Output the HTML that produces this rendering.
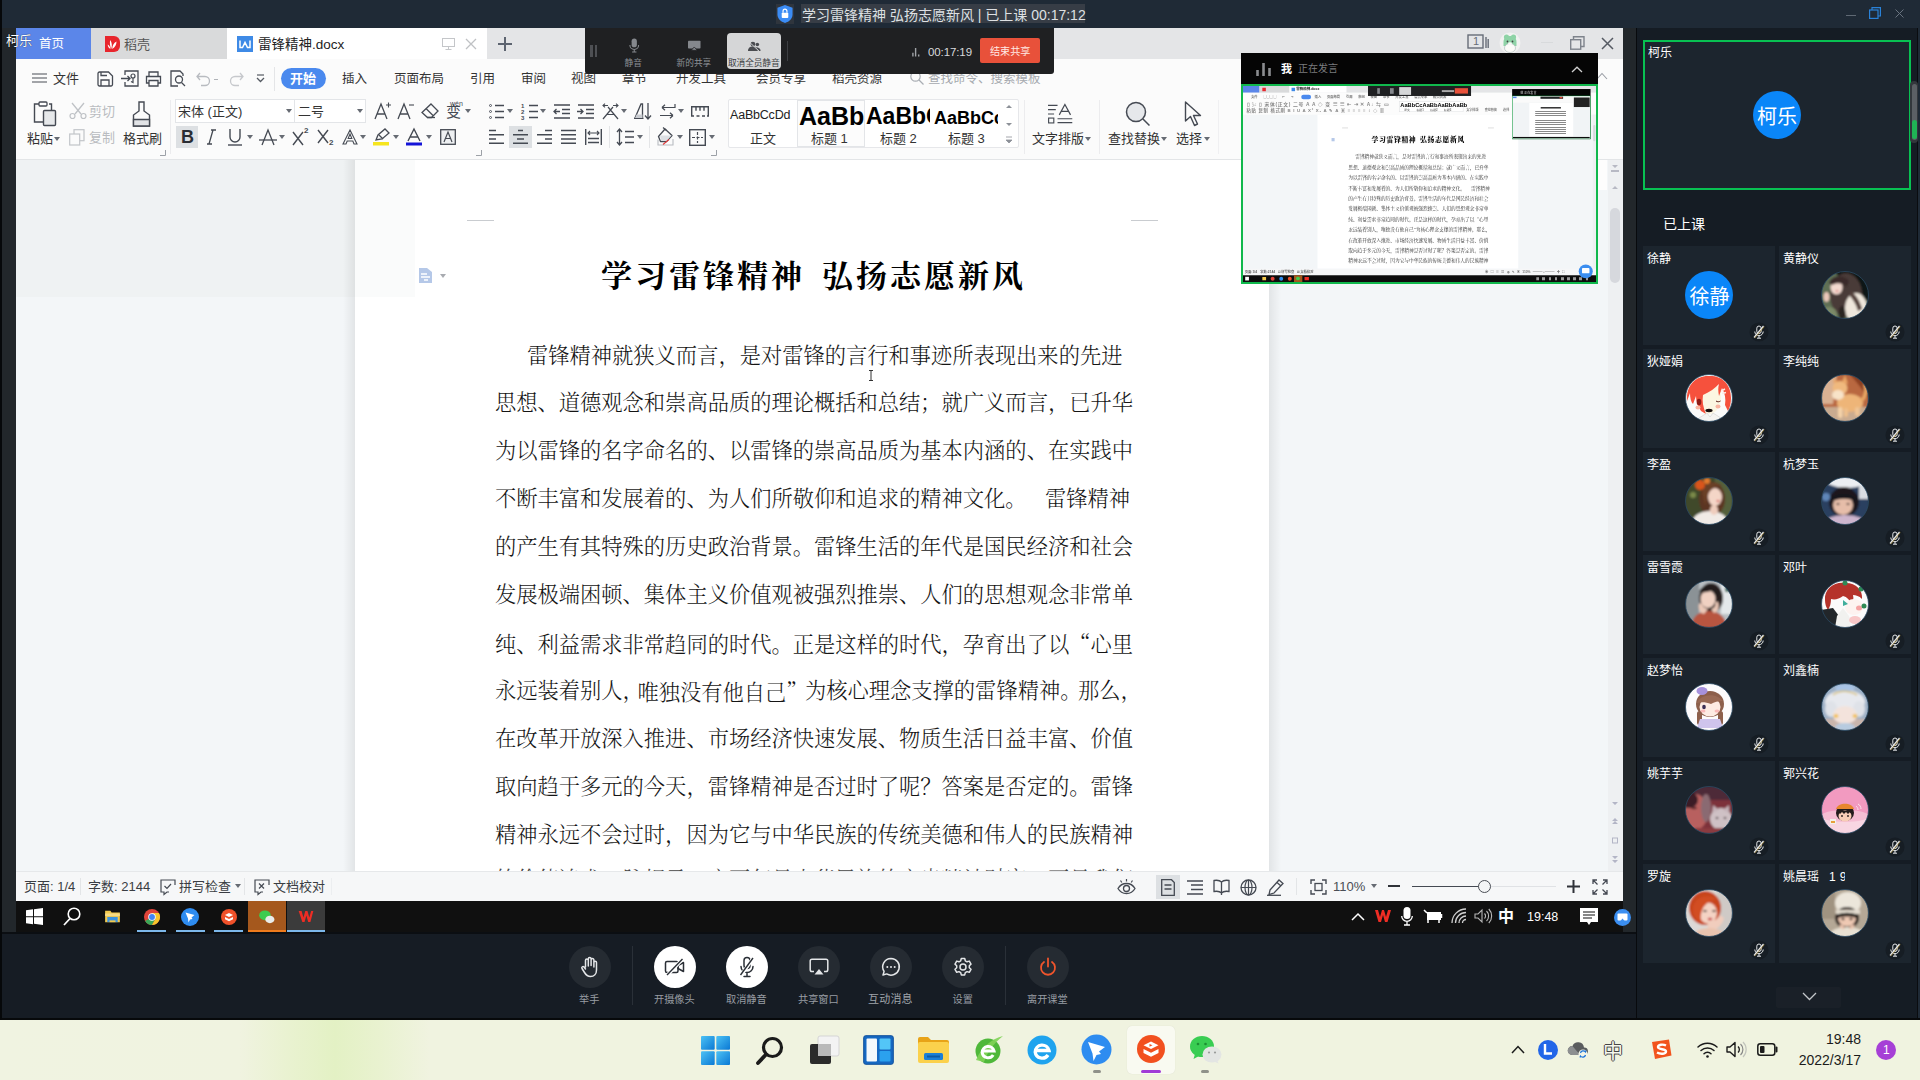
<!DOCTYPE html>
<html lang="zh-CN">
<head>
<meta charset="utf-8">
<title>学习雷锋精神 弘扬志愿新风</title>
<style>
*{box-sizing:border-box;margin:0;padding:0}
html,body{width:1920px;height:1080px;overflow:hidden;background:#1a232d}
body{position:relative;font-family:"Liberation Sans","Noto Sans CJK SC",sans-serif;color:#222;-webkit-font-smoothing:antialiased}
.abs{position:absolute}
svg{position:absolute;overflow:visible}
.t{position:absolute;white-space:nowrap;line-height:1}
/* ---------- outer app ---------- */
#titlebar{left:0;top:0;width:1920px;height:28px;background:#1f2a36}
#leftstrip{left:0;top:28px;width:16px;height:990px;background:#22272b}
#leftedge{left:0;top:0;width:2px;height:1020px;background:#06080a}
#midstrip{left:1623px;top:28px;width:13px;height:904px;background:#22272b}
#rightpanel{left:1636px;top:28px;width:284px;height:990px;background:#151c24}
#ctrlbar{left:0;top:932px;width:1636px;height:86px;background:#161c24}
#ctrlline{left:0;top:1018px;width:1920px;height:2px;background:#07090b}
#vline{left:1636px;top:28px;width:1px;height:990px;background:#080a0d}
#win11{left:0;top:1020px;width:1920px;height:60px;background:#eff1df}
/* ---------- WPS window ---------- */
.q{font-family:'Noto Serif CJK SC',serif}
.bl{position:absolute;left:140px;white-space:nowrap;line-height:1;font-size:21.270px;letter-spacing:0}
#wps{left:16px;top:28px;width:1607px;height:873px;background:#fff;overflow:hidden}
#win10{left:16px;top:901px;width:1607px;height:31px;background:#101010}
</style>
</head>
<body>
<div id="titlebar" class="abs"></div>
<div id="leftstrip" class="abs"></div>
<div id="midstrip" class="abs"></div>
<div id="rightpanel" class="abs"></div>
<div id="ctrlbar" class="abs"></div>
<div id="wps" class="abs">
<div class="abs" style="left:-16px;top:-28px;width:1920px;height:1080px">
<!-- tab bar -->
<div class="abs" style="left:16px;top:28px;width:1607px;height:31px;background:#e4e5e7"></div>
<div class="abs" style="left:16px;top:28px;width:75px;height:31px;background:#5b86e9"></div>
<div class="t" style="left:39px;top:38px;font-size:12.500px;color:#fff">首页</div>
<div class="abs" style="left:91px;top:28px;width:136px;height:31px;background:#d9dadb"></div>
<svg style="left:104px;top:36px" width="16" height="16" viewBox="0 0 16 16"><path d="M1 0h9a6 6 0 0 1 6 6v4a6 6 0 0 1-6 6H1z" fill="#e8262d"/><path d="M7.200 13C6 10 5.500 7 6.200 4c1.300 2 1.800 4 1.600 6.500zM8.200 13c.2-3.500 1.500-6 4.300-7.500 0 3-1.300 5.800-4.300 7.500zM6.500 13C4.800 12 3.800 10.500 3.700 8.500c1.500 .8 2.500 2.300 2.800 4.500z" fill="#fff"/></svg>
<div class="t" style="left:124px;top:38px;font-size:13px;color:#555">稻壳</div>
<div class="abs" style="left:227px;top:28px;width:260px;height:31px;background:#fff"></div>
<svg style="left:237px;top:36px" width="16" height="16" viewBox="0 0 16 16"><rect width="16" height="16" fill="#3e8ae6"/><path d="M3 4.500v7h2.500l2.500-5 2.500 5H13v-7" fill="none" stroke="#fff" stroke-width="1.500"/></svg>
<div class="t" style="left:258px;top:38px;font-size:13.500px;color:#222">雷锋精神.docx</div>
<svg style="left:442px;top:38px" width="13" height="12" viewBox="0 0 13 12"><rect x=".5" y=".5" width="12" height="8" fill="none" stroke="#c4c6c9"/><path d="M6.500 8.500v3M3.500 11.500h6" stroke="#c4c6c9"/></svg>
<svg style="left:465px;top:38px" width="12" height="12" viewBox="0 0 12 12"><path d="M1 1l10 10M11 1L1 11" stroke="#bfc1c4" stroke-width="1.300"/></svg>
<svg style="left:498px;top:37px" width="14" height="14" viewBox="0 0 14 14"><path d="M7 0v14M0 7h14" stroke="#5d6470" stroke-width="2"/></svg>
<!-- right window controls -->
<svg style="left:1467px;top:34px" width="22" height="16" viewBox="0 0 22 16"><rect x="1" y="1" width="15" height="13" fill="none" stroke="#676d78" stroke-width="1.400"/><path d="M19 3v11M21.200 5v9" stroke="#676d78" stroke-width="1.400"/></svg>
<div class="t" style="left:1473px;top:36px;font-size:11px;color:#676d78">1</div>
<svg style="left:1499px;top:32px" width="22" height="22" viewBox="0 0 22 22"><circle cx="11" cy="11" r="10.500" fill="#f1f2f1"/><circle cx="7.500" cy="5" r="2.600" fill="#8ed3a6"/><circle cx="14.500" cy="5" r="2.600" fill="#8ed3a6"/><path d="M4.500 10c0-4 3-6 6.500-6s6.500 2 6.500 6v4h-13z" fill="#8ed3a6"/><ellipse cx="11" cy="16" rx="5.500" ry="4.500" fill="#fbfbf8" stroke="#9aa" stroke-width=".5"/><circle cx="8.500" cy="9.500" r=".9" fill="#444"/><circle cx="13.500" cy="9.500" r=".9" fill="#444"/><ellipse cx="11" cy="11.500" rx="2" ry="1.200" fill="#f5f7f4"/></svg>
<div class="abs" style="left:1541px;top:42px;width:12px;height:1px;background:#d8dadc"></div>
<svg style="left:1570px;top:36px" width="15" height="14" viewBox="0 0 15 14"><rect x=".7" y="3.700" width="10" height="9.500" fill="none" stroke="#7e838c" stroke-width="1.400"/><path d="M3.500 3.500V.7h10.500v9.800h-3" fill="none" stroke="#7e838c" stroke-width="1.400"/></svg>
<svg style="left:1601px;top:37px" width="13" height="13" viewBox="0 0 13 13"><path d="M1 1l11 11M12 1L1 12" stroke="#555a63" stroke-width="1.500"/></svg>
<!-- menu row -->
<div class="abs" style="left:16px;top:59px;width:1607px;height:37px;background:#fbfbfb"></div>
<svg style="left:32px;top:73px" width="15" height="10" viewBox="0 0 15 10"><path d="M0 1h15M0 5h15M0 9h15" stroke="#4a4f57" stroke-width="1.200"/></svg>
<div class="t" style="left:53px;top:72px;font-size:13px;color:#333">文件</div>
<svg style="left:97px;top:71px" width="17" height="16" viewBox="0 0 17 16"><path d="M1 2.500a1.500 1.500 0 0 1 1.500-1.500h9l4 4v8.500a1.500 1.500 0 0 1-1.500 1.500h-11.500a1.500 1.500 0 0 1-1.500-1.500zM4 15v-6h8v6M4 1v3.500h6" fill="none" stroke="#454a53" stroke-width="1.300"/></svg>
<svg style="left:121px;top:70px" width="18" height="17" viewBox="0 0 18 17"><path d="M4 5V1h13v15H4v-4" fill="none" stroke="#454a53" stroke-width="1.300"/><path d="M0 8.500h9M6.500 6l2.500 2.500-2.500 2.500" fill="none" stroke="#454a53" stroke-width="1.300"/><circle cx="12" cy="6" r="2" fill="none" stroke="#454a53" stroke-width="1.200"/><path d="M12 8v4.500l-2-1" fill="none" stroke="#454a53" stroke-width="1.200"/></svg>
<svg style="left:145px;top:71px" width="17" height="16" viewBox="0 0 17 16"><path d="M4 5V1h9v4M4 12H1.500V5.500h14V12H13M4 9.500h9V15H4z" fill="none" stroke="#454a53" stroke-width="1.300"/></svg>
<svg style="left:170px;top:70px" width="17" height="17" viewBox="0 0 17 17"><path d="M13 6V4l-3-3H1v15h7" fill="none" stroke="#454a53" stroke-width="1.300"/><circle cx="9" cy="9.500" r="3.500" fill="none" stroke="#454a53" stroke-width="1.300"/><path d="M11.500 12.500l3.500 3.500" stroke="#454a53" stroke-width="1.300"/></svg>
<svg style="left:196px;top:72px" width="15" height="14" viewBox="0 0 15 14"><path d="M4 1L1 4.500 4 8M1 4.500h8a4.500 4.500 0 0 1 0 9H5" fill="none" stroke="#b8bbc0" stroke-width="1.300"/></svg>
<div class="abs" style="left:214px;top:79px;width:4px;height:1px;background:#b0b3b8"></div>
<svg style="left:229px;top:72px" width="15" height="14" viewBox="0 0 15 14"><path d="M11 1l3 3.500L11 8M14 4.500H6a4.500 4.500 0 0 0 0 9h4" fill="none" stroke="#c6c8cc" stroke-width="1.300"/></svg>
<svg style="left:256px;top:74px" width="9" height="9" viewBox="0 0 9 9"><path d="M1 1h7" stroke="#555a62" stroke-width="1.200"/><path d="M1 4l3.500 3.500L8 4" fill="none" stroke="#555a62" stroke-width="1.300"/></svg>
<div class="abs" style="left:274px;top:67px;width:1px;height:24px;background:#e4e5e7"></div>
<div class="abs" style="left:281px;top:68px;width:45px;height:21px;border-radius:11px;background:#4a89ee"></div>
<div class="t" style="left:290px;top:72px;font-size:13px;color:#fff;font-weight:bold">开始</div>
<div class="t" style="left:342px;top:73px;font-size:12.500px;color:#333">插入</div>
<div class="t" style="left:394px;top:73px;font-size:12.500px;color:#333">页面布局</div>
<div class="t" style="left:470px;top:73px;font-size:12.500px;color:#333">引用</div>
<div class="t" style="left:521px;top:73px;font-size:12.500px;color:#333">审阅</div>
<div class="t" style="left:571px;top:73px;font-size:12.500px;color:#333">视图</div>
<div class="t" style="left:622px;top:73px;font-size:12.500px;color:#333">章节</div>
<div class="t" style="left:676px;top:73px;font-size:12.500px;color:#333">开发工具</div>
<div class="t" style="left:756px;top:73px;font-size:12.500px;color:#333">会员专享</div>
<div class="t" style="left:832px;top:73px;font-size:12.500px;color:#333">稻壳资源</div>
<svg style="left:910px;top:71px" width="14" height="14" viewBox="0 0 14 14"><circle cx="5.500" cy="5.500" r="4.700" fill="none" stroke="#a9adb3" stroke-width="1.200"/><path d="M9 9l4.500 4.500" stroke="#a9adb3" stroke-width="1.200"/></svg>
<div class="t" style="left:928px;top:73px;font-size:12.500px;color:#a5a9ae">查找命令、搜索模板</div>
<svg style="left:1596px;top:72px" width="12" height="8" viewBox="0 0 12 8"><path d="M1 7l5-5.500L11 7" fill="none" stroke="#9a9ea5" stroke-width="1.100"/></svg>
<!-- ribbon -->
<div class="abs" style="left:16px;top:96px;width:1607px;height:64px;background:#fbfbfb"></div>
<div class="abs" style="left:16px;top:159px;width:1607px;height:1px;background:#e3e5e7"></div>
<!-- paste -->
<svg style="left:33px;top:101px" width="24" height="26" viewBox="0 0 24 26"><path d="M6 3H1.500v18H10" fill="none" stroke="#454a53" stroke-width="1.400"/><path d="M16 3h2.500v6" fill="none" stroke="#454a53" stroke-width="1.400"/><rect x="6" y="1" width="8" height="4" rx="1" fill="#fff" stroke="#454a53" stroke-width="1.300"/><rect x="10.500" y="9.500" width="12" height="15" rx="1" fill="#e6e8ea" stroke="#454a53" stroke-width="1.400"/></svg>
<div class="t" style="left:27px;top:132px;font-size:13px;color:#333">粘贴</div>
<svg style="left:54px;top:137px" width="6" height="4" viewBox="0 0 6 4"><path d="M0 0h6L3 4z" fill="#666b73"/></svg>
<svg style="left:69px;top:103px" width="18" height="16" viewBox="0 0 18 16"><path d="M3 0l9 11M15 0L6 11" stroke="#bfc2c6" stroke-width="1.300"/><circle cx="3.500" cy="13" r="2.500" fill="none" stroke="#bfc2c6" stroke-width="1.200"/><circle cx="14.500" cy="13" r="2.500" fill="none" stroke="#bfc2c6" stroke-width="1.200"/></svg>
<div class="t" style="left:89px;top:105px;font-size:13px;color:#b9bcc0">剪切</div>
<svg style="left:69px;top:129px" width="16" height="17" viewBox="0 0 16 17"><rect x="5" y=".7" width="10" height="11" fill="none" stroke="#c2c5c9" stroke-width="1.200"/><rect x=".7" y="5" width="10" height="11" fill="#fbfbfb" stroke="#c2c5c9" stroke-width="1.200"/></svg>
<div class="t" style="left:89px;top:131px;font-size:13px;color:#b9bcc0">复制</div>
<svg style="left:132px;top:101px" width="19" height="26" viewBox="0 0 19 26"><path d="M7 1h5v9l5.500 4v11h-16V14L7 10z" fill="none" stroke="#454a53" stroke-width="1.400"/><path d="M1.500 18.500h16V25h-16z" fill="#e1e3e6" stroke="#454a53" stroke-width="1.400"/></svg>
<div class="t" style="left:123px;top:132px;font-size:13px;color:#333">格式刷</div>
<svg style="left:160px;top:150px" width="6" height="6" viewBox="0 0 6 6"><path d="M0 5.500h5.500V0" fill="none" stroke="#9da1a7" stroke-width="1"/></svg>
<div class="abs" style="left:170px;top:100px;width:1px;height:54px;background:#ececee"></div>
<!-- font boxes -->
<div class="abs" style="left:175px;top:99px;width:191px;height:24px;border:1px solid #e3e5e8;background:#fff"></div>
<div class="abs" style="left:294px;top:99px;width:1px;height:24px;background:#e3e5e8"></div>
<div class="t" style="left:178px;top:105px;font-size:13px;color:#333">宋体 (正文)</div>
<svg style="left:286px;top:109px" width="6" height="4" viewBox="0 0 6 4"><path d="M0 0h6L3 4z" fill="#666b73"/></svg>
<div class="t" style="left:298px;top:105px;font-size:13px;color:#333">二号</div>
<svg style="left:357px;top:109px" width="6" height="4" viewBox="0 0 6 4"><path d="M0 0h6L3 4z" fill="#666b73"/></svg>
<!-- A+ A- eraser wen -->
<svg style="left:374px;top:102px" width="18" height="18" viewBox="0 0 18 18"><path d="M1 17L7 2l6 15M3 12h8" fill="none" stroke="#454a53" stroke-width="1.300"/><path d="M12 3h5M14.500 .5v5" stroke="#454a53" stroke-width="1.100"/></svg>
<svg style="left:397px;top:102px" width="18" height="18" viewBox="0 0 18 18"><path d="M1 17L7 2l6 15M3 12h8" fill="none" stroke="#454a53" stroke-width="1.300"/><path d="M12 3h5" stroke="#454a53" stroke-width="1.100"/></svg>
<svg style="left:421px;top:103px" width="18" height="16" viewBox="0 0 18 16"><path d="M10 1l7 7-6.500 6.500h-4L1 9.500z" fill="none" stroke="#454a53" stroke-width="1.300"/><path d="M5 5.500l7 7" stroke="#454a53" stroke-width="1.300"/><path d="M6 14.500h8" stroke="#454a53" stroke-width="1.300"/></svg>
<div class="t" style="left:446px;top:104px;font-size:15px;color:#454a53">变</div>
<div class="t" style="left:450px;top:100px;font-size:7px;color:#454a53">wén</div>
<svg style="left:465px;top:109px" width="6" height="4" viewBox="0 0 6 4"><path d="M0 0h6L3 4z" fill="#666b73"/></svg>
<!-- row 2 -->
<div class="abs" style="left:176px;top:126px;width:22px;height:22px;background:#dde0e3"></div>
<div class="t" style="left:181px;top:128px;font-size:18px;font-weight:bold;color:#2a2d33">B</div>
<svg style="left:206px;top:129px" width="11" height="16" viewBox="0 0 11 16"><path d="M7 1L3 15M5 1h5M1 15h5" stroke="#454a53" stroke-width="1.300"/></svg>
<svg style="left:227px;top:129px" width="16" height="17" viewBox="0 0 16 17"><path d="M3 0v8a5 5 0 0 0 10 0V0" fill="none" stroke="#454a53" stroke-width="1.400"/><path d="M1 16h14" stroke="#454a53" stroke-width="1.400"/></svg>
<svg style="left:247px;top:135px" width="6" height="4" viewBox="0 0 6 4"><path d="M0 0h6L3 4z" fill="#666b73"/></svg>
<svg style="left:259px;top:129px" width="18" height="17" viewBox="0 0 18 17"><path d="M3 16L9 1l6 15" fill="none" stroke="#454a53" stroke-width="1.300"/><path d="M0 11h18" stroke="#454a53" stroke-width="1.300"/></svg>
<svg style="left:279px;top:135px" width="6" height="4" viewBox="0 0 6 4"><path d="M0 0h6L3 4z" fill="#666b73"/></svg>
<svg style="left:292px;top:129px" width="18" height="16" viewBox="0 0 18 16"><path d="M1 3l10 13M11 3L1 16" stroke="#454a53" stroke-width="1.400"/></svg>
<div class="t" style="left:304px;top:127px;font-size:8px;font-weight:bold;color:#454a53">2</div>
<svg style="left:317px;top:129px" width="18" height="16" viewBox="0 0 18 16"><path d="M1 1l10 13M11 1L1 14" stroke="#454a53" stroke-width="1.400"/></svg>
<div class="t" style="left:329px;top:139px;font-size:8px;font-weight:bold;color:#454a53">2</div>
<svg style="left:342px;top:129px" width="16" height="16" viewBox="0 0 16 16"><path d="M1 15L8 1l7 14h-3l-1.200-3H5.200L4 15zM6.200 9.500h3.600L8 5z" fill="none" stroke="#454a53" stroke-width="1.100"/></svg>
<svg style="left:360px;top:135px" width="6" height="4" viewBox="0 0 6 4"><path d="M0 0h6L3 4z" fill="#666b73"/></svg>
<svg style="left:373px;top:128px" width="18" height="18" viewBox="0 0 18 18"><path d="M3 12l2-5 7-6 4 4-7 6z" fill="none" stroke="#454a53" stroke-width="1.300"/><path d="M6 7l4 4" stroke="#454a53" stroke-width="1.200"/><rect x="0" y="14" width="16" height="3.500" fill="#f6e51e"/></svg>
<svg style="left:393px;top:135px" width="6" height="4" viewBox="0 0 6 4"><path d="M0 0h6L3 4z" fill="#666b73"/></svg>
<svg style="left:406px;top:128px" width="16" height="18" viewBox="0 0 16 18"><path d="M2 13L8 1l6 12M4 9h8" fill="none" stroke="#454a53" stroke-width="1.400"/><rect x="0" y="14.500" width="16" height="3" fill="#1414d8"/></svg>
<svg style="left:426px;top:135px" width="6" height="4" viewBox="0 0 6 4"><path d="M0 0h6L3 4z" fill="#666b73"/></svg>
<svg style="left:440px;top:129px" width="16" height="16" viewBox="0 0 16 16"><rect x=".7" y=".7" width="14.600" height="14.600" fill="#eef0f2" stroke="#454a53" stroke-width="1.300"/><path d="M4 13L8 3l4 10M5.500 9.500h5" fill="none" stroke="#454a53" stroke-width="1.200"/></svg>
<svg style="left:476px;top:150px" width="6" height="6" viewBox="0 0 6 6"><path d="M0 5.500h5.500V0" fill="none" stroke="#9da1a7" stroke-width="1"/></svg>
<!-- paragraph group row1 -->
<svg style="left:489px;top:104px" width="16" height="15" viewBox="0 0 16 15"><circle cx="1.500" cy="1.500" r="1" fill="none" stroke="#454a53" stroke-width=".9"/><circle cx="1.500" cy="7.500" r="1" fill="none" stroke="#454a53" stroke-width=".9"/><circle cx="1.500" cy="13.500" r="1" fill="none" stroke="#454a53" stroke-width=".9"/><path d="M6 1.500h9M6 7.500h9M6 13.500h9" stroke="#454a53" stroke-width="1.300"/></svg>
<svg style="left:507px;top:109px" width="6" height="4" viewBox="0 0 6 4"><path d="M0 0h6L3 4z" fill="#666b73"/></svg>
<svg style="left:521px;top:103px" width="17" height="17" viewBox="0 0 17 17"><path d="M8 2.500h9M8 8.500h9M8 14.500h9" stroke="#454a53" stroke-width="1.300"/><text x="0" y="5" font-size="6" font-weight="bold" font-family="Liberation Sans,sans-serif" fill="#454a53">1</text><text x="0" y="11" font-size="6" font-weight="bold" font-family="Liberation Sans,sans-serif" fill="#454a53">2</text><text x="0" y="17" font-size="6" font-weight="bold" font-family="Liberation Sans,sans-serif" fill="#454a53">3</text></svg>
<svg style="left:540px;top:109px" width="6" height="4" viewBox="0 0 6 4"><path d="M0 0h6L3 4z" fill="#666b73"/></svg>
<svg style="left:553px;top:104px" width="18" height="15" viewBox="0 0 18 15"><path d="M1 1h16M9 5.500h8M9 9.500h8M1 14h16" stroke="#454a53" stroke-width="1.300"/><path d="M7 7.500H1M3.500 5L1 7.500 3.500 10" fill="none" stroke="#454a53" stroke-width="1.300"/></svg>
<svg style="left:577px;top:104px" width="18" height="15" viewBox="0 0 18 15"><path d="M1 1h16M9 5.500h8M9 9.500h8M1 14h16" stroke="#454a53" stroke-width="1.300"/><path d="M0 7.500h6M3.500 5L6 7.500 3.500 10" fill="none" stroke="#454a53" stroke-width="1.300"/></svg>
<svg style="left:602px;top:103px" width="17" height="17" viewBox="0 0 17 17"><path d="M1 16L11 4M16 16L6 4M4.500 11.500h8" fill="none" stroke="#454a53" stroke-width="1.200"/><path d="M1 2.500h5M3 .7L1 2.500 3 4.300M16 2.500h-5M14 .7l2 1.800-2 1.800" fill="none" stroke="#454a53" stroke-width="1.100"/></svg>
<svg style="left:621px;top:109px" width="6" height="4" viewBox="0 0 6 4"><path d="M0 0h6L3 4z" fill="#666b73"/></svg>
<svg style="left:634px;top:103px" width="18" height="17" viewBox="0 0 18 17"><path d="M1 15L7 1h1.500v14zM0 15.300h9.500" fill="none" stroke="#454a53" stroke-width="1.300"/><path d="M2.500 11.500h6v3.500h-7.500z" fill="#c9ccd1"/><path d="M14 0v16M11 12.500l3 3.500 3-3.500" fill="none" stroke="#454a53" stroke-width="1.300"/></svg>
<svg style="left:659px;top:104px" width="17" height="16" viewBox="0 0 17 16"><path d="M3 3.500h13V0M3 3.500L6 .7M3 3.500L6 6.300" fill="none" stroke="#454a53" stroke-width="1.200"/><path d="M1 11.500h13M14 11.500l-3-2.800M14 11.500l-3 2.800" fill="none" stroke="#454a53" stroke-width="1.200"/></svg>
<svg style="left:678px;top:109px" width="6" height="4" viewBox="0 0 6 4"><path d="M0 0h6L3 4z" fill="#666b73"/></svg>
<svg style="left:691px;top:106px" width="18" height="11" viewBox="0 0 18 11"><path d="M.7 10V.7h16.600V10M5 .7v4M9 .7v4M13 .7v4" fill="none" stroke="#454a53" stroke-width="1.400"/><path d="M0 10h3M5.500 10h3M11 10h3M16 10h2" stroke="#454a53" stroke-width="1.300"/></svg>
<!-- paragraph row2 -->
<svg style="left:489px;top:129px" width="16" height="16" viewBox="0 0 16 16"><path d="M0 1.500h7M0 5.700h15M0 10h7M0 14.300h15" stroke="#454a53" stroke-width="1.400"/></svg>
<div class="abs" style="left:509px;top:126px;width:23px;height:22px;background:#dde0e3"></div>
<svg style="left:513px;top:129px" width="16" height="16" viewBox="0 0 16 16"><path d="M5 1.500h5M0 5.700h15M4 10h7M0 14.300h15" stroke="#454a53" stroke-width="1.400"/></svg>
<svg style="left:537px;top:129px" width="16" height="16" viewBox="0 0 16 16"><path d="M8 1.500h7M0 5.700h15M8 10h7M0 14.300h15" stroke="#454a53" stroke-width="1.400"/></svg>
<svg style="left:561px;top:129px" width="16" height="16" viewBox="0 0 16 16"><path d="M0 1.500h15M0 5.700h15M0 10h15M0 14.300h15" stroke="#454a53" stroke-width="1.400"/></svg>
<svg style="left:585px;top:129px" width="17" height="16" viewBox="0 0 17 16"><path d="M.7 0v16M16.300 0v16" stroke="#454a53" stroke-width="1.400"/><path d="M3 4h11M5 2l-2 2 2 2M12 2l2 2-2 2" fill="none" stroke="#454a53" stroke-width="1.100"/><path d="M3 9.500h11M3 13.500h11" stroke="#454a53" stroke-width="1.400"/></svg>
<div class="abs" style="left:609px;top:126px;width:1px;height:22px;background:#e4e5e7"></div>
<svg style="left:616px;top:128px" width="18" height="18" viewBox="0 0 18 18"><path d="M3.500 1v16M1 4l2.500-3L6 4M1 14l2.500 3L6 14" fill="none" stroke="#454a53" stroke-width="1.300"/><path d="M9 3.500h9M9 9h9M9 14.500h9" stroke="#454a53" stroke-width="1.400"/></svg>
<svg style="left:637px;top:135px" width="6" height="4" viewBox="0 0 6 4"><path d="M0 0h6L3 4z" fill="#666b73"/></svg>
<div class="abs" style="left:649px;top:126px;width:1px;height:22px;background:#e4e5e7"></div>
<svg style="left:657px;top:127px" width="18" height="19" viewBox="0 0 18 19"><path d="M8 2l7 6.500-5.500 6h-6L1.500 9.500z" fill="none" stroke="#454a53" stroke-width="1.300" stroke-linejoin="round"/><path d="M3 8.500h11.500l-5 5.500h-5.500z" fill="#dcdfe3"/><path d="M6 .5l3.500 3" stroke="#454a53" stroke-width="1.200"/><path d="M1 12.500v5.500h15V12" fill="none" stroke="#b9bcc2" stroke-width="1.100"/><path d="M6 17.500l6-5" stroke="#e03a3a" stroke-width="1.100"/></svg>
<svg style="left:677px;top:135px" width="6" height="4" viewBox="0 0 6 4"><path d="M0 0h6L3 4z" fill="#666b73"/></svg>
<svg style="left:689px;top:129px" width="17" height="17" viewBox="0 0 17 17"><rect x=".7" y=".7" width="15.600" height="15.600" fill="none" stroke="#454a53" stroke-width="1.400"/><path d="M8.500 3v11M3 8.500h11" stroke="#454a53" stroke-width="1.200" stroke-dasharray="3 1.500"/></svg>
<svg style="left:709px;top:135px" width="6" height="4" viewBox="0 0 6 4"><path d="M0 0h6L3 4z" fill="#666b73"/></svg>
<svg style="left:711px;top:150px" width="6" height="6" viewBox="0 0 6 6"><path d="M0 5.500h5.500V0" fill="none" stroke="#9da1a7" stroke-width="1"/></svg>
<!-- style gallery -->
<div class="abs" style="left:728px;top:99px;width:291px;height:49px;border:1px solid #e6e7ea;background:#fff;border-radius:2px"></div>
<div class="abs" style="left:797px;top:100px;width:68px;height:47px;border:1px solid #e3e5e8;background:#fcfcfc"></div>
<div class="t" style="left:730px;top:109px;font-size:12.500px;color:#222;letter-spacing:-.2px">AaBbCcDd</div>
<div class="t" style="left:750px;top:132px;font-size:13px;color:#333">正文</div>
<div class="abs" style="left:798px;top:101px;width:66px;height:28px;overflow:hidden"><div class="t" style="left:1px;top:3px;font-size:25px;font-weight:bold;color:#000;letter-spacing:0">AaBb</div></div>
<div class="t" style="left:811px;top:132px;font-size:13px;color:#333">标题 1</div>
<div class="abs" style="left:866px;top:101px;width:64px;height:28px;overflow:hidden"><div class="t" style="left:0;top:4px;font-size:23px;font-weight:bold;color:#000">AaBbC</div></div>
<div class="t" style="left:880px;top:132px;font-size:13px;color:#333">标题 2</div>
<div class="abs" style="left:934px;top:101px;width:64px;height:28px;overflow:hidden"><div class="t" style="left:0;top:8px;font-size:18px;font-weight:bold;color:#000">AaBbCc</div></div>
<div class="t" style="left:948px;top:132px;font-size:13px;color:#333">标题 3</div>
<svg style="left:1005px;top:104px" width="8" height="42" viewBox="0 0 8 42"><path d="M1 4l3-3 3 3z" fill="#8d9198"/><path d="M1 19l3 3 3-3z" fill="#8d9198"/><path d="M1 33h6M1 36l3 3 3-3z" fill="#8d9198" stroke="#8d9198" stroke-width=".8"/></svg>
<div class="abs" style="left:1024px;top:100px;width:1px;height:54px;background:#ececee"></div>
<!-- 文字排版 -->
<svg style="left:1048px;top:103px" width="26" height="22" viewBox="0 0 30 24"><path d="M0 2h11M0 7h9M0 12h7" stroke="#454a53" stroke-width="1.400"/><rect x=".7" y="16.700" width="6" height="5.600" fill="none" stroke="#454a53" stroke-width="1.300"/><path d="M11 17.500h17M11 22h17" stroke="#454a53" stroke-width="1.300"/><path d="M13 13L19.500 1 26 13M15.500 9h8" fill="none" stroke="#454a53" stroke-width="1.400"/></svg>
<div class="t" style="left:1032px;top:132px;font-size:13px;color:#333">文字排版</div>
<svg style="left:1085px;top:137px" width="6" height="4" viewBox="0 0 6 4"><path d="M0 0h6L3 4z" fill="#666b73"/></svg>
<div class="abs" style="left:1099px;top:100px;width:1px;height:54px;background:#ececee"></div><div class="abs" style="left:1218px;top:100px;width:1px;height:54px;background:#f0f0f2"></div>
<svg style="left:1125px;top:101px" width="26" height="26" viewBox="0 0 26 26"><circle cx="11" cy="11" r="9.500" fill="#e6e8eb" stroke="#454a53" stroke-width="1.500"/><path d="M18 18l6.500 6.500" stroke="#454a53" stroke-width="1.500"/></svg>
<div class="t" style="left:1108px;top:132px;font-size:13px;color:#333">查找替换</div>
<svg style="left:1161px;top:137px" width="6" height="4" viewBox="0 0 6 4"><path d="M0 0h6L3 4z" fill="#666b73"/></svg>
<svg style="left:1184px;top:101px" width="18" height="26" viewBox="0 0 18 26"><path d="M1.500 1v19l5-4.500 4 9 3-1.500-4-8.500h7z" fill="none" stroke="#454a53" stroke-width="1.400" stroke-linejoin="round"/></svg>
<div class="t" style="left:1176px;top:132px;font-size:13px;color:#333">选择</div>
<svg style="left:1204px;top:137px" width="6" height="4" viewBox="0 0 6 4"><path d="M0 0h6L3 4z" fill="#666b73"/></svg>

<!-- document area -->
<div class="abs" style="left:16px;top:160px;width:1607px;height:711px;background:#f3f6f8"></div>
<div class="abs" style="left:16px;top:160px;width:400px;height:137px;background:#eff2f3"></div>
<div class="abs" style="left:343px;top:160px;width:12px;height:711px;background:linear-gradient(90deg,rgba(0,0,0,0),rgba(0,0,0,.07))"></div>
<div class="abs" style="left:1269px;top:160px;width:12px;height:711px;background:linear-gradient(270deg,rgba(0,0,0,0),rgba(0,0,0,.07))"></div>
<div id="page" class="abs" style="left:355px;top:160px;width:914px;height:711px;background:#fff;overflow:hidden"></div>
<div class="abs" style="left:355px;top:160px;width:60px;height:137px;background:#fafbfb"></div>
<div class="abs" style="left:467px;top:220px;width:27px;height:1px;background:#c9ccd0"></div>
<div class="abs" style="left:1131px;top:220px;width:27px;height:1px;background:#c9ccd0"></div>
<svg style="left:419px;top:268px" width="14" height="15" viewBox="0 0 14 15"><path d="M0 0h8l5 4v11H0z" fill="#b5c8e8"/><path d="M2 6h6M2 9h9M5 12h4" stroke="#fff" stroke-width="1.300"/></svg>
<svg style="left:440px;top:274px" width="6" height="4" viewBox="0 0 6 4"><path d="M0 0h6L3 4z" fill="#a8abb0"/></svg>
<div id="doc" class="abs" style="left:355px;top:160px;width:914px;height:711px;overflow:hidden;font-family:'Liberation Serif','Noto Serif CJK SC',serif;color:#151515;font-weight:300">
<div class="t" style="left:246px;top:101px;font-size:31px;font-weight:700;letter-spacing:3px;color:#000">学习雷锋精神</div>
<div class="t" style="left:467px;top:101px;font-size:31px;font-weight:700;letter-spacing:3px;color:#000">弘扬志愿新风</div>
<div class="bl" style="top:185.5px;left:172px">雷锋精神就狭义而言，是对雷锋的言行和事迹所表现出来的先进</div>
<div class="bl" style="top:233.4px">思想、道德观念和崇高品质的理论概括和总结；就广义而言，已升华</div>
<div class="bl" style="top:281.3px">为以雷锋的名字命名的、以雷锋的崇高品质为基本内涵的、在实践中</div>
<div class="bl" style="top:329.2px">不断丰富和发展着的、为人们所敬仰和追求的精神文化。</div>
<div class="bl" style="top:329.2px;left:690px">雷锋精神</div>
<div class="bl" style="top:377.1px">的产生有其特殊的历史政治背景。雷锋生活的年代是国民经济和社会</div>
<div class="bl" style="top:425.0px">发展极端困顿、集体主义价值观被强烈推崇、人们的思想观念非常单</div>
<div class="bl" style="top:472.9px">纯、利益需求非常趋同的时代。正是这样的时代，孕育出了以<span class="q">“</span>心里</div>
<div class="bl" style="top:520.8px">永远装着别人，</div><div class="bl" style="top:520.8px;left:282.500px">唯独没有他自己<span class="q">”</span></div><div class="bl" style="top:520.8px;left:450px">为核心理念支撑的雷锋精神。</div><div class="bl" style="top:520.8px;left:723px">那么，</div>
<div class="bl" style="top:568.7px">在改革开放深入推进、市场经济快速发展、物质生活日益丰富、价值</div>
<div class="bl" style="top:616.6px">取向趋于多元的今天，雷锋精神是否过时了呢？答案是否定的。雷锋</div>
<div class="bl" style="top:664.5px">精神永远不会过时，因为它与中华民族的传统美德和伟人的民族精神</div>
<div class="bl" style="top:710.4px;color:#444">的价值追求一脉相承，它不仅是中华民族的宝贵精神财富，更是我们</div>
</div>
<svg style="left:868px;top:370px" width="6" height="11" viewBox="0 0 6 11"><path d="M3 0v11M1 .5h4M1 10.500h4" stroke="#333" stroke-width="1"/></svg>
<!-- right scroll strip -->
<div class="abs" style="left:1598px;top:160px;width:9px;height:30px;background:#fdfdfd"></div>
<div class="abs" style="left:1608px;top:160px;width:15px;height:711px;background:#eef0f2"></div>
<div class="abs" style="left:1610px;top:208px;width:10px;height:75px;border-radius:5px;background:#d6d8dd"></div>
<svg style="left:1611px;top:165px" width="8" height="27" viewBox="0 0 8 27"><path d="M1 0h6L4 3zM0 5h8v2H0zM1 24l3-3 3 3z" fill="#b7b9c4"/></svg>
<svg style="left:1611px;top:800px" width="8" height="66" viewBox="0 0 8 66"><path d="M1 2h6L4 5zM1 21l3-3 3 3zM1 24l3-3 3 3zM1 56h6L4 59zM1 60h6L4 63z" fill="#b3b5c6"/><rect x="1.500" y="38" width="5" height="5" fill="none" stroke="#b3b5c6"/></svg>
<!-- status bar -->
<div class="abs" style="left:16px;top:871px;width:1607px;height:30px;background:#f6f7f8;border-top:1px solid #e6e8ea"></div>
<div class="t" style="left:24px;top:880px;font-size:13px;color:#3a3d42">页面: 1/4</div>
<div class="abs" style="left:80px;top:878px;width:1px;height:17px;background:#e3e5e7"></div>
<div class="t" style="left:88px;top:880px;font-size:13px;color:#3a3d42">字数: 2144</div>
<svg style="left:160px;top:879px" width="16" height="16" viewBox="0 0 16 16"><path d="M15 6V1H1v12h3v2.500L7 13h2" fill="none" stroke="#454a53" stroke-width="1.200"/><path d="M4.500 7l2.500 2.500 4-4.500" fill="none" stroke="#454a53" stroke-width="1.200"/></svg>
<div class="t" style="left:179px;top:880px;font-size:13px;color:#3a3d42">拼写检查</div>
<svg style="left:235px;top:884px" width="6" height="4" viewBox="0 0 6 4"><path d="M0 0h6L3 4z" fill="#666b73"/></svg>
<div class="abs" style="left:244px;top:878px;width:1px;height:17px;background:#e3e5e7"></div>
<svg style="left:254px;top:879px" width="16" height="16" viewBox="0 0 16 16"><path d="M15 6V1H1v12h3v2.500L7 13h2" fill="none" stroke="#454a53" stroke-width="1.200"/><path d="M5 4.500l5 5M10 4.500l-5 5" stroke="#454a53" stroke-width="1.200"/></svg>
<div class="t" style="left:273px;top:880px;font-size:13px;color:#3a3d42">文档校对</div>
<div class="abs" style="left:331px;top:878px;width:1px;height:17px;background:#eceef0"></div>
<!-- status right -->
<svg style="left:1117px;top:878px" width="19" height="17" viewBox="0 0 19 17"><path d="M1 10.500C3 7 6 5.500 9.500 5.500S16 7 18 10.500C16 14 13 15.500 9.500 15.500S3 14 1 10.500z" fill="none" stroke="#454a53" stroke-width="1.300"/><circle cx="9.500" cy="10.500" r="3" fill="none" stroke="#454a53" stroke-width="1.300"/><path d="M9.500 1v2.500M3.500 2.500l1.300 2M15.500 2.500l-1.300 2" stroke="#454a53" stroke-width="1.200"/></svg>
<div class="abs" style="left:1156px;top:875px;width:24px;height:24px;background:#dde0e3"></div>
<svg style="left:1161px;top:879px" width="14" height="17" viewBox="0 0 14 17"><path d="M.7 .7h9.800l2.800 2.800v12.800H.7z" fill="none" stroke="#454a53" stroke-width="1.300"/><path d="M3.500 6h7M3.500 10h7" stroke="#454a53" stroke-width="1.300"/></svg>
<svg style="left:1187px;top:880px" width="16" height="15" viewBox="0 0 16 15"><path d="M0 1h16M4 5h12M4 9.500h12M0 14h16" stroke="#454a53" stroke-width="1.300"/></svg>
<svg style="left:1213px;top:879px" width="17" height="17" viewBox="0 0 17 17"><path d="M8.500 3C7 1.500 4 1 1 1.500v11c3-.5 6 0 7.500 1.500 1.500-1.500 4.500-2 7.500-1.500v-11C13 1 10 1.500 8.500 3zM8.500 3v13" fill="none" stroke="#454a53" stroke-width="1.300"/></svg>
<svg style="left:1240px;top:879px" width="17" height="17" viewBox="0 0 17 17"><circle cx="8.500" cy="8.500" r="7.500" fill="none" stroke="#454a53" stroke-width="1.300"/><ellipse cx="8.500" cy="8.500" rx="3.500" ry="7.500" fill="none" stroke="#454a53" stroke-width="1.200"/><path d="M1 8.500h15M8.500 1v15" stroke="#454a53" stroke-width="1.200"/></svg>
<svg style="left:1267px;top:878px" width="19" height="18" viewBox="0 0 19 18"><path d="M3 12L12 2l4 3.500L7 15l-5 1.500zM10 4.500l4 3.500" fill="none" stroke="#454a53" stroke-width="1.300"/><path d="M0 17.300h14" stroke="#454a53" stroke-width="1.300"/></svg>
<div class="abs" style="left:1296px;top:878px;width:1px;height:17px;background:#e3e5e7"></div>
<svg style="left:1310px;top:879px" width="17" height="16" viewBox="0 0 17 16"><path d="M1 5V1h4M12 1h4v4M16 11v4h-4M5 15H1v-4" fill="none" stroke="#454a53" stroke-width="1.400"/><rect x="5" y="4.500" width="7" height="7" fill="none" stroke="#454a53" stroke-width="1.300"/></svg>
<div class="t" style="left:1333px;top:880px;font-size:13px;color:#4a4e55">110%</div>
<svg style="left:1371px;top:884px" width="6" height="4" viewBox="0 0 6 4"><path d="M0 0h6L3 4z" fill="#666b73"/></svg>
<div class="abs" style="left:1388px;top:885px;width:12px;height:2px;background:#2f3238"></div>
<div class="abs" style="left:1412px;top:886px;width:72px;height:1px;background:#454a53"></div>
<div class="abs" style="left:1484px;top:886px;width:72px;height:1px;background:#e0e2e5"></div>
<div class="abs" style="left:1478px;top:880px;width:13px;height:13px;border-radius:50%;border:1.300px solid #4a4e55;background:#f4f5f6"></div>
<svg style="left:1567px;top:880px" width="13" height="13" viewBox="0 0 13 13"><path d="M6.500 0v13M0 6.500h13" stroke="#2f3238" stroke-width="2"/></svg>
<svg style="left:1592px;top:879px" width="16" height="16" viewBox="0 0 16 16"><path d="M1 5V1h4M1 1l4.500 4.500M11 1h4v4M15 1l-4.500 4.500M15 11v4h-4M15 15l-4.500-4.500M5 15H1v-4M1 15l4.500-4.500" fill="none" stroke="#454a53" stroke-width="1.300"/></svg>



</div>

</div>
<div id="win10" class="abs">
<div class="abs" style="left:-16px;top:-901px;width:1920px;height:1080px">
<svg style="left:26px;top:908px" width="17" height="17" viewBox="0 0 17 17"><path d="M0 2.300l7-1v7H0zM8 1.200L17 0v8.300H8zM0 9.300h7v7l-7-1zM8 9.300h9V17l-9-1.200z" fill="#fff"/></svg>
<svg style="left:63px;top:907px" width="18" height="19" viewBox="0 0 18 19"><circle cx="11" cy="7" r="5.800" fill="none" stroke="#fff" stroke-width="1.600"/><path d="M7 11.500L1 18" stroke="#fff" stroke-width="1.800"/></svg>
<svg style="left:105px;top:910px" width="15" height="13" viewBox="0 0 17 15"><path d="M0 1h6l1.500 2H17v11H0z" fill="#f2c94e"/><path d="M0 4h17v3H0z" fill="#f7dc85"/><path d="M2.500 8h12v6h-12z" fill="#3b93e0"/><path d="M5 12h7v2H5z" fill="#f2c94e"/></svg>
<svg style="left:143.500px;top:908.500px" width="16" height="16" viewBox="0 0 18 18"><circle cx="9" cy="9" r="9" fill="#e0443a"/><path d="M9 9L1.200 13.500A9 9 0 0 0 9 18l4-7z" fill="#3aa757"/><path d="M9 9l4 2-4 7A9 9 0 0 0 16.800 4.500H9z" fill="#f7c52b"/><circle cx="9" cy="9" r="4.200" fill="#fff"/><circle cx="9" cy="9" r="3.300" fill="#4285f4"/></svg>
<div class="abs" style="left:137px;top:930px;width:29px;height:2px;background:#7cb7ea"></div>
<svg style="left:181px;top:908px" width="18" height="18" viewBox="0 0 18 18"><circle cx="9" cy="9" r="9" fill="#2e8cf0"/><path d="M4.500 4.500l9 2.500-3 2.500 1 1.500-2.500 .5-1.500 3-.5-4z" fill="#fff"/></svg>
<div class="abs" style="left:176px;top:930px;width:29px;height:2px;background:#7cb7ea"></div>
<svg style="left:221px;top:909px" width="16" height="16" viewBox="0 0 18 18"><circle cx="9" cy="9" r="9" fill="#f0512a"/><path d="M9 4.500l4.500 2.300L9 9 4.500 6.800zM4.500 9l4.500 2.300L13.500 9v2.500L9 13.800l-4.500-2.300z" fill="#fff"/></svg>
<div class="abs" style="left:214px;top:930px;width:29px;height:2px;background:#7cb7ea"></div>
<div class="abs" style="left:248px;top:901px;width:38px;height:31px;background:#a5581d"></div>
<div class="abs" style="left:248px;top:930px;width:38px;height:2px;background:#ee7a1c"></div>
<svg style="left:257.500px;top:909.500px" width="18" height="14" viewBox="0 0 20 17"><ellipse cx="7.500" cy="6.500" rx="7" ry="6" fill="#3ccc4e"/><ellipse cx="13.500" cy="11.500" rx="5.500" ry="4.500" fill="#e9ecea"/></svg>
<div class="abs" style="left:287px;top:901px;width:38px;height:31px;background:#3b3b3b"></div>
<div class="abs" style="left:287px;top:930px;width:38px;height:2px;background:#7cb7ea"></div>
<svg style="left:296.500px;top:911px" width="18" height="11" viewBox="0 0 20 15"><path d="M0 0h4l2.500 9L9 0h3l2.500 9L17 0h3l-4 15h-3L10.500 6 8 15H5z" fill="#ee2d24"/></svg>
<!-- tray -->
<svg style="left:1351px;top:913px" width="14" height="8" viewBox="0 0 14 8"><path d="M1 7l6-6 6 6" fill="none" stroke="#fff" stroke-width="1.500"/></svg>
<svg style="left:1375px;top:910px" width="16" height="12" viewBox="0 0 16 12"><path d="M0 0h3l2 7 2-7h2l2 7 2-7h3l-3.500 12h-2.500L8 5l-2 7H3.500z" fill="#ee2d24"/></svg>
<svg style="left:1401px;top:907px" width="12" height="19" viewBox="0 0 12 19"><rect x="2.500" y="0" width="7" height="12" rx="3.500" fill="#fff"/><path d="M.7 9a5.300 5.300 0 0 0 10.600 0M6 14.500V18M3 18h6" fill="none" stroke="#fff" stroke-width="1.300"/></svg>
<svg style="left:1424px;top:909px" width="18" height="14" viewBox="0 0 18 14"><rect x="3" y="3" width="14" height="8" fill="#fff"/><path d="M0 1l3 3M17.500 5v4M4 11v3M15 11v3" stroke="#fff" stroke-width="1.500"/></svg>
<svg style="left:1451px;top:908px" width="15" height="15" viewBox="0 0 15 15"><path d="M1 15A14 14 0 0 1 15 1M4.500 15A10.500 10.500 0 0 1 15 4.500M8 15a7 7 0 0 1 7-7M11.500 15a3.500 3.500 0 0 1 3.500-3.500" fill="none" stroke="#cfcfcf" stroke-width="1.300"/></svg>
<svg style="left:1474px;top:908px" width="17" height="16" viewBox="0 0 17 16"><path d="M1 6h3l4-4v12l-4-4H1z" fill="none" stroke="#b5b5b5" stroke-width="1.100"/><path d="M10.500 5.500a3.500 3.500 0 0 1 0 5M12.500 3a7 7 0 0 1 0 10M14.800 1a10 10 0 0 1 0 14" fill="none" stroke="#bbb" stroke-width="1.100"/></svg>
<div class="t" style="left:1498px;top:909px;font-size:16px;color:#fff;font-weight:bold">中</div>
<div class="t" style="left:1527px;top:911px;font-size:12.500px;color:#fff">19:48</div>
<svg style="left:1580px;top:908px" width="18" height="18" viewBox="0 0 18 18"><path d="M0 0h18v14h-7l-2 3-2-3H0z" fill="#fff"/><path d="M3 4h12M3 7h12M3 10h9" stroke="#101010" stroke-width="1.200"/></svg>
</div>

</div>
<!-- title bar content -->
<div class="abs" style="left:776px;top:4px;width:18px;height:20px;background:#2f353d"></div><svg style="left:777px;top:5px" width="16" height="18" viewBox="0 0 18 20"><path d="M9 0l8.500 3v7.500c0 4.500-3.500 8-8.500 9.500C4 18.500.5 15 .5 10.500V3z" fill="#3b8cf5"/><rect x="5.300" y="8.500" width="7.400" height="6" rx="1" fill="#fff"/><path d="M6.800 8.500V6.800a2.200 2.200 0 0 1 4.400 0v1.700" fill="none" stroke="#fff" stroke-width="1.300"/></svg>
<div class="abs" style="left:801px;top:4px;width:284px;height:19px;background:#373d46"></div>
<div class="t" style="left:802px;top:8px;font-size:14px;color:#dde0e3">学习雷锋精神 弘扬志愿新风 | 已上课 00:17:12</div>
<div class="abs" style="left:1846px;top:15px;width:10px;height:1px;background:#5f6974"></div>
<svg style="left:1869px;top:7px" width="12" height="12" viewBox="0 0 12 12"><rect x=".6" y="3" width="8.400" height="8.400" fill="none" stroke="#2a82d8" stroke-width="1.200"/><path d="M3 3V.6h8.400V9H9" fill="none" stroke="#2a82d8" stroke-width="1.200"/></svg>
<svg style="left:1895px;top:9px" width="9" height="9" viewBox="0 0 9 9"><path d="M.5 .5l8 8M8.500 .5l-8 8" stroke="#6a7480" stroke-width="1"/></svg>
<div class="t" style="left:6px;top:34px;font-size:13px;color:#fff;text-shadow:0 0 1px #000">柯乐</div>
<!-- sharing toolbar -->
<div class="abs" style="left:585px;top:28px;width:469px;height:46px;background:#1f2022;border-radius:0 0 3px 3px"></div>
<div class="abs" style="left:590px;top:45px;width:2.500px;height:12px;background:#4e5054"></div>
<div class="abs" style="left:594.500px;top:45px;width:2.500px;height:12px;background:#4e5054"></div>
<svg style="left:628.500px;top:38px" width="10.500" height="15" viewBox="0 0 12 16"><rect x="3" y="0" width="6" height="10" rx="3" fill="#85888d"/><path d="M1 7.500a5 5 0 0 0 10 0M6 12.500V15M3.500 15.500h5" fill="none" stroke="#85888d" stroke-width="1.200"/></svg>
<div class="t" style="left:624.500px;top:59px;font-size:8.700px;color:#8d9095">静音</div>
<svg style="left:687.500px;top:40px" width="12.500" height="11" viewBox="0 0 17 13"><rect x="0" y="0" width="17" height="10.500" rx="1" fill="#85888d"/><path d="M4.500 13l4-4.500 4 4.500z" fill="#85888d" stroke="#1f2022" stroke-width="1"/></svg>
<div class="t" style="left:676.500px;top:59px;font-size:8.700px;color:#8d9095">新的共享</div>
<div class="abs" style="left:727px;top:33px;width:54px;height:36px;background:#d5d6d7;border-radius:4px"></div>
<svg style="left:748px;top:40.500px" width="13" height="11" viewBox="0 0 16 13"><circle cx="6" cy="3.500" r="3" fill="#4a4c50"/><path d="M0 12c0-4 2.500-5.500 6-5.500s6 1.500 6 5.500z" fill="#4a4c50"/><circle cx="11.500" cy="4" r="2.200" fill="#4a4c50"/><path d="M10 7.500c3 0 5.500 1.500 5.500 4.500h-3" fill="#4a4c50"/><path d="M1 .5l13 12" stroke="#d5d6d7" stroke-width="1.200"/></svg>
<div class="t" style="left:728px;top:59px;font-size:8.700px;color:#3c3e42;letter-spacing:-.1px">取消全员静音</div>
<div class="abs" style="left:787px;top:41px;width:1px;height:20px;background:#3d3f43"></div>
<svg style="left:911px;top:47.500px" width="10" height="8.500" viewBox="0 0 11 11"><path d="M1.500 6v5M5 0v11M9 8.500V11" stroke="#a0a3a7" stroke-width="1.800"/></svg>
<div class="t" style="left:928px;top:46.500px;font-size:11.500px;color:#d8d9db;letter-spacing:-.1px">00:17:19</div>
<div class="abs" style="left:980px;top:38px;width:60px;height:25px;background:#e8513a;border-radius:2px"></div>
<div class="t" style="left:990px;top:46.500px;font-size:10.100px;color:#ffe9e4">结束共享</div>
<!-- mini preview -->
<div class="abs" style="left:1241px;top:53px;width:357px;height:231px;background:#050505"></div>
<svg style="left:1256px;top:63px" width="15" height="13" viewBox="0 0 15 13"><path d="M1.500 7v6M7.500 0v13M13.500 5v8" stroke="#8b8d90" stroke-width="2.600"/></svg>
<div class="t" style="left:1281px;top:63.500px;font-size:11px;color:#fff;font-weight:bold">我</div>
<div class="t" style="left:1298px;top:64px;font-size:10px;color:#7a7c7f">正在发言</div>
<svg style="left:1571px;top:66px" width="12" height="7" viewBox="0 0 12 7"><path d="M1 6l5-4.800L11 6" fill="none" stroke="#d0d0d0" stroke-width="1.300"/></svg>
<div class="abs" style="left:1241px;top:84px;width:357px;height:200px;background:#10b84c"></div>
<div id="mini" class="abs" style="left:1243px;top:85.500px;width:353px;height:196.500px;background:#f1f4f6;overflow:hidden">
<div class="abs" style="left:0;top:0;width:1607px;height:904px;transform:scale(.2197,.2168);transform-origin:0 0;background:#f3f6f8">
<div class="abs" style="left:0;top:0;width:1607px;height:31px;background:#e4e5e7"></div>
<div class="abs" style="left:0;top:0;width:75px;height:31px;background:#5b86e9"></div>
<div class="abs" style="left:75px;top:0;width:136px;height:31px;background:#d9dadb"></div>
<div class="abs" style="left:88px;top:8px;width:16px;height:16px;background:#e8262d"></div>
<div class="abs" style="left:211px;top:0;width:260px;height:31px;background:#fff"></div>
<div class="abs" style="left:221px;top:8px;width:16px;height:16px;background:#3e8ae6"></div>
<div class="t" style="left:242px;top:7px;font-size:16px;color:#222;font-weight:bold">雷锋精神.docx</div>
<div class="abs" style="left:0;top:31px;width:1607px;height:101px;background:#fcfcfc"></div>
<div class="abs" style="left:265px;top:40px;width:45px;height:21px;border-radius:11px;background:#4a89ee"></div>
<div class="t" style="left:36px;top:42px;font-size:15px;color:#777;font-weight:bold;word-spacing:22px">文件 ▢▢▢▢ ↶ ↷</div>
<div class="t" style="left:326px;top:42px;font-size:15px;color:#777;font-weight:bold;word-spacing:22px">插入 页面布局 引用 审阅 视图 章节 开发工具 会员专享 稻壳资源</div>
<div class="t" style="left:16px;top:74px;font-size:22px;color:#888;font-weight:bold;letter-spacing:3px">▯ ✂ ▯ 宋体(正文)  二号 A A ◇ 变 ☰ ☰ ⇤ ⇥ ✕ A↓ ⇆ ▭</div>
<div class="t" style="left:16px;top:104px;font-size:20px;color:#888;font-weight:bold;letter-spacing:3px">粘贴 复制 格式刷 B I U A X² X₂ A ✎ A ▣ ≡ ≡ ≡ ≡ ↕ ◇ ▦</div>
<div class="abs" style="left:712px;top:71px;width:291px;height:49px;border:2px solid #d8dadd;background:#fff"></div>
<div class="t" style="left:716px;top:76px;font-size:26px;font-weight:bold;color:#000">AaBbCcAaBbAaBbAaBb</div>
<div class="t" style="left:734px;top:104px;font-size:13px;font-weight:bold;color:#777;word-spacing:26px">正文 标题1 标题2 标题3</div>
<div class="t" style="left:1016px;top:104px;font-size:14px;font-weight:bold;color:#777;word-spacing:24px">文字排版 查找替换 选择</div>
<div class="abs" style="left:569px;top:0;width:469px;height:46px;background:#1f2022"></div>
<div class="abs" style="left:711px;top:5px;width:54px;height:36px;background:#d5d6d7"></div>
<div class="abs" style="left:611px;top:10px;width:12px;height:26px;background:#85888d"></div>
<div class="abs" style="left:669px;top:10px;width:17px;height:26px;background:#85888d"></div>
<div class="abs" style="left:905px;top:19px;width:56px;height:9px;background:#aaa"></div>
<div class="abs" style="left:964px;top:10px;width:60px;height:25px;background:#e8513a"></div>
<div class="abs" style="left:339px;top:132px;width:914px;height:711px;background:#fff"></div>
<div class="abs" style="left:451px;top:192px;width:27px;height:3px;background:#ccc"></div>
<div class="abs" style="left:1115px;top:192px;width:27px;height:3px;background:#ccc"></div>
<div class="abs" style="left:403px;top:240px;width:14px;height:15px;background:#b5c8e8"></div>
<div class="abs" style="left:339px;top:132px;width:914px;height:711px;overflow:hidden;font-family:'Liberation Serif','Noto Serif CJK SC',serif;color:#4a4a4a;font-weight:500">
<div class="t" style="left:246px;top:101px;font-size:31px;font-weight:900;letter-spacing:3px;color:#000">学习雷锋精神</div>
<div class="t" style="left:467px;top:101px;font-size:31px;font-weight:900;letter-spacing:3px;color:#000">弘扬志愿新风</div>
<div class="bl" style="top:185px;left:172px">雷锋精神就狭义而言，是对雷锋的言行和事迹所表现出来的先进</div>
<div class="bl" style="top:233px">思想、道德观念和崇高品质的理论概括和总结；就广义而言，已升华</div>
<div class="bl" style="top:281px">为以雷锋的名字命名的、以雷锋的崇高品质为基本内涵的、在实践中</div>
<div class="bl" style="top:329px">不断丰富和发展着的、为人们所敬仰和追求的精神文化。 　雷锋精神</div>
<div class="bl" style="top:377px">的产生有其特殊的历史政治背景。雷锋生活的年代是国民经济和社会</div>
<div class="bl" style="top:425px">发展极端困顿、集体主义价值观被强烈推崇、人们的思想观念非常单</div>
<div class="bl" style="top:473px">纯、利益需求非常趋同的时代。正是这样的时代，孕育出了以<span class="q">“</span>心里</div>
<div class="bl" style="top:521px">永远装着别人，唯独没有他自己”为核心理念支撑的雷锋精神。那么，</div>
<div class="bl" style="top:569px">在改革开放深入推进、市场经济快速发展、物质生活日益丰富、价值</div>
<div class="bl" style="top:617px">取向趋于多元的今天，雷锋精神是否过时了呢？答案是否定的。雷锋</div>
<div class="bl" style="top:665px">精神永远不会过时，因为它与中华民族的传统美德和伟人的民族精神</div>
</div>
<div class="abs" style="left:1592px;top:132px;width:15px;height:711px;background:#eef0f2"></div>
<div class="abs" style="left:1594px;top:180px;width:10px;height:75px;border-radius:5px;background:#d6d8dd"></div>
<div class="abs" style="left:0;top:843px;width:1607px;height:30px;background:#f6f7f8"></div>
<div class="t" style="left:8px;top:850px;font-size:15px;color:#666;font-weight:bold;word-spacing:10px">页面:1/4 字数:2144 ☑拼写检查 ☒文档校对</div>
<div class="t" style="left:1101px;top:850px;font-size:15px;color:#777;font-weight:bold;word-spacing:6px">◉ ▤ ☰ ▥ ◍ ✎ ▣ 110% ━━━○━━━ ✚ ⛶</div>
<div class="abs" style="left:0;top:873px;width:1607px;height:31px;background:#0c0c0c"></div>
<div class="abs" style="left:10px;top:880px;width:17px;height:17px;background:#fff"></div>
<div class="abs" style="left:88px;top:881px;width:17px;height:15px;background:#f2c94e"></div>
<div class="abs" style="left:126px;top:880px;width:18px;height:18px;border-radius:9px;background:#e0443a"></div>
<div class="abs" style="left:165px;top:880px;width:18px;height:18px;border-radius:9px;background:#2e8cf0"></div>
<div class="abs" style="left:204px;top:880px;width:18px;height:18px;border-radius:9px;background:#f0512a"></div>
<div class="abs" style="left:232px;top:873px;width:38px;height:31px;background:#a5581d"></div>
<div class="abs" style="left:241px;top:880px;width:18px;height:16px;border-radius:8px;background:#3ccc4e"></div>
<div class="abs" style="left:280px;top:881px;width:20px;height:15px;background:#ee2d24"></div>
<div class="abs" style="left:1335px;top:882px;width:250px;height:14px;background:repeating-linear-gradient(90deg,#9a9a9a 0 12px,#0c0c0c 12px 28px)"></div>
<div class="abs" style="left:1528px;top:823px;width:64px;height:64px;border-radius:50%;background:#3b8ef0"></div><div class="abs" style="left:1543px;top:840px;width:34px;height:24px;border-radius:4px;background:#fff"></div>
<!-- nested preview -->
<div class="abs" style="left:1225px;top:14px;width:357px;height:231px;background:#050505"></div>
<div class="t" style="left:1262px;top:23px;font-size:14px;color:#aaa;font-weight:bold">我 正在发言</div>
<div class="abs" style="left:1225px;top:45px;width:357px;height:200px;background:#17b24a"></div>
<div class="abs" style="left:1227px;top:47px;width:353px;height:196px;background:#f1f4f6"></div>
<div class="abs" style="left:1229px;top:49px;width:349px;height:28px;background:#fafafa"></div>
<div class="abs" style="left:1229px;top:49px;width:16px;height:7px;background:#5b86e9"></div>
<div class="abs" style="left:1354px;top:49px;width:103px;height:10px;background:#1f2022"></div>
<div class="abs" style="left:1441px;top:51px;width:13px;height:6px;background:#e8513a"></div>
<div class="abs" style="left:1303px;top:78px;width:200px;height:155px;background:#fff"></div>
<div class="abs" style="left:1330px;top:114px;width:140px;height:112px;background:repeating-linear-gradient(180deg,#888 0 4px,#fff 4px 10.500px)"></div>
<div class="abs" style="left:1355px;top:97px;width:92px;height:7px;background:#333"></div>
<div class="abs" style="left:1229px;top:235px;width:349px;height:6px;background:#0c0c0c"></div>
<div class="abs" style="left:1506px;top:53px;width:72px;height:44px;background:#222"></div>
</div>

</div>
<!-- blue circle on edge -->
<div class="abs" style="left:1614px;top:909px;width:17px;height:17px;border-radius:50%;background:#3b8ef0"></div>
<svg style="left:1617px;top:913px" width="11" height="9" viewBox="0 0 11 9"><rect x=".5" y=".5" width="10" height="7" rx="1" fill="#fff"/><path d="M3 8.500l2.500-3 2.500 3z" fill="#3b8ef0"/></svg>

<!--PANEL-START-->
<svg width="0" height="0" style="left:0;top:0"><defs><filter id="b1" x="-10%" y="-10%" width="120%" height="120%"><feGaussianBlur stdDeviation=".45"/></filter><filter id="b2" x="-10%" y="-10%" width="120%" height="120%"><feGaussianBlur stdDeviation="1.1"/></filter></defs></svg>
<div class="abs" style="left:1643px;top:40px;width:268px;height:150px;border:2px solid #08c152;background:#1c252e"></div>
<div class="t" style="left:1648px;top:47px;font-size:12px;color:#fff">柯乐</div>
<div class="abs" style="left:1753px;top:91px;width:48px;height:48px;border-radius:50%;background:#0a86f8"></div>
<div class="t" style="left:1757px;top:106.500px;font-size:20px;color:#fff">柯乐</div>
<div class="abs" style="left:1917px;top:28px;width:1px;height:990px;background:#0a0c0f"></div>
<div class="abs" style="left:1918px;top:28px;width:2px;height:990px;background:#1f2a36"></div>
<div class="abs" style="left:1910px;top:81px;width:8px;height:62px;border-radius:4px;background:#33373c"></div>
<div class="abs" style="left:1911.500px;top:84px;width:5px;height:56px;border-radius:2.500px;background:#5c6065"></div>
<div class="abs" style="left:1911.500px;top:120px;width:5px;height:19px;border-radius:2.500px;background:#1fb455"></div>
<div class="t" style="left:1663px;top:217px;font-size:14px;color:#fff">已上课</div>
<div class="abs" style="left:1643px;top:246px;width:132px;height:99px;background:#1c252e"></div>
<div class="t" style="left:1647px;top:253px;font-size:12px;color:#fff">徐静</div>
<div class="abs" style="left:1685px;top:270.5px;width:48px;height:48px;border-radius:50%;background:#0a86f8"></div>
<div class="t" style="left:1689.5px;top:286.5px;font-size:20px;color:#fff">徐静</div>
<svg style="left:1749px;top:322px" width="20" height="20" viewBox="0 0 20 20"><circle cx="10" cy="10" r="9.500" fill="#161d24"/><rect x="7.800" y="4" width="4.400" height="7.500" rx="2.200" fill="none" stroke="#e6e8ea" stroke-width="1"/><path d="M5.800 9.500a4.200 4.200 0 0 0 8.400 0M10 13.800v2.200M8 16.200h4" fill="none" stroke="#e6e8ea" stroke-width="1"/><path d="M14.500 4L5 15.500" stroke="#e6e8ea" stroke-width="1.200"/><path d="M15.300 4.600L5.800 16.100" stroke="#c9a23a" stroke-width=".6"/></svg>
<div class="abs" style="left:1779px;top:246px;width:132px;height:99px;background:#1c252e"></div>
<div class="t" style="left:1783px;top:253px;font-size:12px;color:#fff">黄静仪</div>
<svg style="left:1821px;top:270.5px" width="48" height="48" viewBox="0 0 48 48"><defs><clipPath id="c1"><circle cx="24" cy="24" r="23.500"/></clipPath></defs><g clip-path="url(#c1)"><g filter="url(#b2)"><rect width="48" height="48" fill="#5f6f55"/><path d="M12 0h36v32z" fill="#0e1712"/><ellipse cx="25" cy="24" rx="16" ry="22" fill="#4a3a37"/><ellipse cx="35" cy="37" rx="11" ry="15" fill="#efe7dc"/><path d="M30 20c5 4 9 10 11 18l-4 2c-2-7-5-12-9-16z" fill="#54423e"/><ellipse cx="15.500" cy="16.500" rx="6" ry="7" fill="#f3d9cf"/><path d="M8 12c3-8 14-9 20-2l-2 6c-4-4-10-5-15-2z" fill="#3a2b29"/><ellipse cx="5.500" cy="26" rx="3" ry="5" fill="#ecc9bb"/><ellipse cx="21" cy="42" rx="3.500" ry="7" fill="#2a2524"/><ellipse cx="8" cy="43" rx="8" ry="7" fill="#7b8a68"/><ellipse cx="16" cy="20" rx="1.500" ry=".8" fill="#d9605f"/></g></g><circle cx="24" cy="24" r="23.500" fill="none" stroke="#2b4a63" stroke-width=".8"/></svg>
<svg style="left:1885px;top:322px" width="20" height="20" viewBox="0 0 20 20"><circle cx="10" cy="10" r="9.500" fill="#161d24"/><rect x="7.800" y="4" width="4.400" height="7.500" rx="2.200" fill="none" stroke="#e6e8ea" stroke-width="1"/><path d="M5.800 9.500a4.200 4.200 0 0 0 8.400 0M10 13.800v2.200M8 16.200h4" fill="none" stroke="#e6e8ea" stroke-width="1"/><path d="M14.500 4L5 15.500" stroke="#e6e8ea" stroke-width="1.200"/><path d="M15.300 4.600L5.800 16.100" stroke="#c9a23a" stroke-width=".6"/></svg>
<div class="abs" style="left:1643px;top:349px;width:132px;height:99px;background:#1c252e"></div>
<div class="t" style="left:1647px;top:356px;font-size:12px;color:#fff">狄娅娟</div>
<svg style="left:1685px;top:373.5px" width="48" height="48" viewBox="0 0 48 48"><defs><clipPath id="c2"><circle cx="24" cy="24" r="23.500"/></clipPath></defs><g clip-path="url(#c2)"><g filter="url(#b1)"><rect width="48" height="48" fill="#fbfbfa"/><path d="M12 22c0-8 6-12 13-12s11 5 11 13c0 9-5 17-12 17S12 32 12 22z" fill="#fcf6e2"/><path d="M2 27C1 10 12 1 25 2c12 0 21 8 21 22 0 5-1 9-3 13l-3-6c1-6 0-12-3-17l-3 8c-1-5-1-9 0-12-4 4-9 8-16 11-1 6 0 12 3 19l-5-3c-3-5-5-9-5-15l-3 8c-2-2-3-6-3-11z" fill="#f6513c"/><ellipse cx="14" cy="28" rx="2.300" ry="3.200" fill="#8e1b17"/><path d="M31 27c1.500 1 3 1 4.500 0" stroke="#5a1a16" stroke-width="1" fill="none"/><ellipse cx="24" cy="36.500" rx="3.600" ry="1.700" fill="#120b0a"/><ellipse cx="13" cy="33.500" rx="2.500" ry="2" fill="#f9b5a2"/><ellipse cx="33" cy="32.500" rx="2.500" ry="2" fill="#f9b5a2"/><path d="M14 44l8-5 3 4 3-4 8 5v4H14z" fill="#f5f4f1" stroke="#c9c9c9" stroke-width=".5"/><path d="M36 17l4-2M37 19.500l4-1" stroke="#ffe9e4" stroke-width="1.500"/></g></g><circle cx="24" cy="24" r="23.500" fill="none" stroke="#2b4a63" stroke-width=".8"/></svg>
<svg style="left:1749px;top:425px" width="20" height="20" viewBox="0 0 20 20"><circle cx="10" cy="10" r="9.500" fill="#161d24"/><rect x="7.800" y="4" width="4.400" height="7.500" rx="2.200" fill="none" stroke="#e6e8ea" stroke-width="1"/><path d="M5.800 9.500a4.200 4.200 0 0 0 8.400 0M10 13.800v2.200M8 16.200h4" fill="none" stroke="#e6e8ea" stroke-width="1"/><path d="M14.500 4L5 15.500" stroke="#e6e8ea" stroke-width="1.200"/><path d="M15.300 4.600L5.800 16.100" stroke="#c9a23a" stroke-width=".6"/></svg>
<div class="abs" style="left:1779px;top:349px;width:132px;height:99px;background:#1c252e"></div>
<div class="t" style="left:1783px;top:356px;font-size:12px;color:#fff">李纯纯</div>
<svg style="left:1821px;top:373.5px" width="48" height="48" viewBox="0 0 48 48"><defs><clipPath id="c3"><circle cx="24" cy="24" r="23.500"/></clipPath></defs><g clip-path="url(#c3)"><g filter="url(#b2)"><rect width="48" height="48" fill="#b9673f"/><path d="M0 0h16l-4 30H0z" fill="#d9b193"/><path d="M28 0h20v26c-6-10-12-18-20-26z" fill="#8b3f22"/><rect y="33" width="48" height="15" fill="#c9ab90"/><ellipse cx="29" cy="29" rx="13" ry="9" fill="#eeb578"/><ellipse cx="19" cy="14" rx="7.500" ry="7" fill="#f0b97e"/><path d="M21 8l3-7 3 9z" fill="#eaa767"/><path d="M12 9l1-5 4 4z" fill="#eaa767"/><ellipse cx="17" cy="21" rx="6" ry="5" fill="#f8e3c8"/><path d="M40 27c5-4 6-11 4-17" stroke="#e9a866" stroke-width="3.500" fill="none"/><rect x="17" y="33" width="4.500" height="11" rx="2" fill="#f4d2a8"/><rect x="23" y="34" width="4" height="9" rx="2" fill="#efc08c"/><rect x="34" y="33" width="4.500" height="9" rx="2" fill="#f0c595"/></g></g><circle cx="24" cy="24" r="23.500" fill="none" stroke="#2b4a63" stroke-width=".8"/></svg>
<svg style="left:1885px;top:425px" width="20" height="20" viewBox="0 0 20 20"><circle cx="10" cy="10" r="9.500" fill="#161d24"/><rect x="7.800" y="4" width="4.400" height="7.500" rx="2.200" fill="none" stroke="#e6e8ea" stroke-width="1"/><path d="M5.800 9.500a4.200 4.200 0 0 0 8.400 0M10 13.800v2.200M8 16.200h4" fill="none" stroke="#e6e8ea" stroke-width="1"/><path d="M14.500 4L5 15.500" stroke="#e6e8ea" stroke-width="1.200"/><path d="M15.300 4.600L5.800 16.100" stroke="#c9a23a" stroke-width=".6"/></svg>
<div class="abs" style="left:1643px;top:452px;width:132px;height:99px;background:#1c252e"></div>
<div class="t" style="left:1647px;top:459px;font-size:12px;color:#fff">李盈</div>
<svg style="left:1685px;top:476.5px" width="48" height="48" viewBox="0 0 48 48"><defs><clipPath id="c4"><circle cx="24" cy="24" r="23.500"/></clipPath></defs><g clip-path="url(#c4)"><g filter="url(#b2)"><rect width="48" height="48" fill="#3f4a2b"/><rect x="30" y="0" width="18" height="48" fill="#55603b"/><ellipse cx="27" cy="22" rx="13" ry="17" fill="#5b3521"/><ellipse cx="30" cy="20" rx="7" ry="9" fill="#f4d6c7"/><path d="M17 14c3-9 14-11 20-5-6 0-11 2-14 8l-3 12z" fill="#6b3f26"/><ellipse cx="25" cy="44" rx="17" ry="10" fill="#f1ebe6"/><ellipse cx="29" cy="33" rx="4" ry="5" fill="#efcdbd"/><circle cx="15" cy="8" r="5" fill="#d9541e"/><circle cx="22" cy="4" r="3" fill="#e57b2f"/><circle cx="8" cy="18" r="3" fill="#7a8a4a"/><ellipse cx="33" cy="24" rx="1.500" ry="1" fill="#d24848"/></g></g><circle cx="24" cy="24" r="23.500" fill="none" stroke="#2b4a63" stroke-width=".8"/></svg>
<svg style="left:1749px;top:528px" width="20" height="20" viewBox="0 0 20 20"><circle cx="10" cy="10" r="9.500" fill="#161d24"/><rect x="7.800" y="4" width="4.400" height="7.500" rx="2.200" fill="none" stroke="#e6e8ea" stroke-width="1"/><path d="M5.800 9.500a4.200 4.200 0 0 0 8.400 0M10 13.800v2.200M8 16.200h4" fill="none" stroke="#e6e8ea" stroke-width="1"/><path d="M14.500 4L5 15.500" stroke="#e6e8ea" stroke-width="1.200"/><path d="M15.300 4.600L5.800 16.100" stroke="#c9a23a" stroke-width=".6"/></svg>
<div class="abs" style="left:1779px;top:452px;width:132px;height:99px;background:#1c252e"></div>
<div class="t" style="left:1783px;top:459px;font-size:12px;color:#fff">杭梦玉</div>
<svg style="left:1821px;top:476.5px" width="48" height="48" viewBox="0 0 48 48"><defs><clipPath id="c5"><circle cx="24" cy="24" r="23.500"/></clipPath></defs><g clip-path="url(#c5)"><g filter="url(#b2)"><rect width="48" height="48" fill="#2c3f60"/><ellipse cx="26" cy="2" rx="22" ry="9" fill="#eceef2"/><rect x="38" y="8" width="10" height="14" fill="#d9dde3"/><ellipse cx="23" cy="25" rx="15" ry="15" fill="#1c191d"/><ellipse cx="22" cy="28" rx="10" ry="10" fill="#e6bda9"/><path d="M10 22c4-6 20-7 26 0l-2 2c-7-3-15-3-22 0z" fill="#17141a"/><ellipse cx="24" cy="46" rx="20" ry="8" fill="#cdb5cd"/><ellipse cx="17" cy="27" rx="1.500" ry="1" fill="#2a1f1f"/><ellipse cx="27" cy="27" rx="1.500" ry="1" fill="#2a1f1f"/><circle cx="5" cy="20" r="4" fill="#5f86b8"/></g></g><circle cx="24" cy="24" r="23.500" fill="none" stroke="#2b4a63" stroke-width=".8"/></svg>
<svg style="left:1885px;top:528px" width="20" height="20" viewBox="0 0 20 20"><circle cx="10" cy="10" r="9.500" fill="#161d24"/><rect x="7.800" y="4" width="4.400" height="7.500" rx="2.200" fill="none" stroke="#e6e8ea" stroke-width="1"/><path d="M5.800 9.500a4.200 4.200 0 0 0 8.400 0M10 13.800v2.200M8 16.200h4" fill="none" stroke="#e6e8ea" stroke-width="1"/><path d="M14.500 4L5 15.500" stroke="#e6e8ea" stroke-width="1.200"/><path d="M15.300 4.600L5.800 16.100" stroke="#c9a23a" stroke-width=".6"/></svg>
<div class="abs" style="left:1643px;top:555px;width:132px;height:99px;background:#1c252e"></div>
<div class="t" style="left:1647px;top:562px;font-size:12px;color:#fff">雷雪霞</div>
<svg style="left:1685px;top:579.5px" width="48" height="48" viewBox="0 0 48 48"><defs><clipPath id="c6"><circle cx="24" cy="24" r="23.500"/></clipPath></defs><g clip-path="url(#c6)"><g filter="url(#b2)"><rect width="48" height="48" fill="#b9bfc3"/><rect x="0" y="0" width="14" height="48" fill="#8b9296"/><rect x="36" y="4" width="12" height="30" fill="#e4e8ea"/><rect x="40" y="0" width="8" height="12" fill="#3d6b5a"/><ellipse cx="26" cy="18" rx="12" ry="15" fill="#2a2322"/><ellipse cx="23" cy="19" rx="7.500" ry="9" fill="#f0d1c2"/><path d="M14 12c3-8 15-9 20-2l1 12c-2-6-5-9-9-11-4 1-8 2-12 1z" fill="#231d1c"/><path d="M6 48c1-12 8-17 18-17s17 6 18 17z" fill="#b8543f"/><path d="M14 24c-1 5 1 9 5 10l4-5c-4-1-6-3-6-6z" fill="#ecc9b8"/><path d="M33 22c2 5 0 10-4 11l-3-4c4-1 5-4 4-7z" fill="#ecc9b8"/></g></g><circle cx="24" cy="24" r="23.500" fill="none" stroke="#2b4a63" stroke-width=".8"/></svg>
<svg style="left:1749px;top:631px" width="20" height="20" viewBox="0 0 20 20"><circle cx="10" cy="10" r="9.500" fill="#161d24"/><rect x="7.800" y="4" width="4.400" height="7.500" rx="2.200" fill="none" stroke="#e6e8ea" stroke-width="1"/><path d="M5.800 9.500a4.200 4.200 0 0 0 8.400 0M10 13.800v2.200M8 16.200h4" fill="none" stroke="#e6e8ea" stroke-width="1"/><path d="M14.500 4L5 15.500" stroke="#e6e8ea" stroke-width="1.200"/><path d="M15.300 4.600L5.800 16.100" stroke="#c9a23a" stroke-width=".6"/></svg>
<div class="abs" style="left:1779px;top:555px;width:132px;height:99px;background:#1c252e"></div>
<div class="t" style="left:1783px;top:562px;font-size:12px;color:#fff">邓叶</div>
<svg style="left:1821px;top:579.5px" width="48" height="48" viewBox="0 0 48 48"><defs><clipPath id="c7"><circle cx="24" cy="24" r="23.500"/></clipPath></defs><g clip-path="url(#c7)"><g filter="url(#b1)"><rect width="48" height="48" fill="#fbfbfb"/><path d="M4 20C3 8 14 1 25 3c10 0 17 7 16 16-3-3-6-4-9-4 1 4 0 7-2 9-1-4-4-7-8-8-4 3-8 4-12 3 0 4-1 8-3 11-2-3-3-6-3-10z" fill="#b5322c"/><ellipse cx="33" cy="27" rx="9" ry="8" fill="#fdf3f0"/><ellipse cx="38" cy="28" rx="3" ry="2.500" fill="#f5a3a3"/><path d="M0 30l12-2 6 8-4 12H0z" fill="#24282a"/><path d="M16 36l6-8 6 8 2 12H14z" fill="#f1f1ef"/><circle cx="40" cy="9" r="2.500" fill="#2d8a55"/><circle cx="24" cy="3" r="2.500" fill="#2d8a55"/><circle cx="43" cy="26" r="2.500" fill="#2d8a55"/><ellipse cx="34" cy="40" rx="6" ry="4" fill="#f8c8c8"/><path d="M22 20l5 4-5 2z" fill="#3fae9c"/></g></g><circle cx="24" cy="24" r="23.500" fill="none" stroke="#2b4a63" stroke-width=".8"/></svg>
<svg style="left:1885px;top:631px" width="20" height="20" viewBox="0 0 20 20"><circle cx="10" cy="10" r="9.500" fill="#161d24"/><rect x="7.800" y="4" width="4.400" height="7.500" rx="2.200" fill="none" stroke="#e6e8ea" stroke-width="1"/><path d="M5.800 9.500a4.200 4.200 0 0 0 8.400 0M10 13.800v2.200M8 16.200h4" fill="none" stroke="#e6e8ea" stroke-width="1"/><path d="M14.500 4L5 15.500" stroke="#e6e8ea" stroke-width="1.200"/><path d="M15.300 4.600L5.800 16.100" stroke="#c9a23a" stroke-width=".6"/></svg>
<div class="abs" style="left:1643px;top:658px;width:132px;height:99px;background:#1c252e"></div>
<div class="t" style="left:1647px;top:665px;font-size:12px;color:#fff">赵梦怡</div>
<svg style="left:1685px;top:682.5px" width="48" height="48" viewBox="0 0 48 48"><defs><clipPath id="c8"><circle cx="24" cy="24" r="23.500"/></clipPath></defs><g clip-path="url(#c8)"><g filter="url(#b1)"><rect width="48" height="48" fill="#fdfbfc"/><ellipse cx="25" cy="21" rx="14" ry="13" fill="#8d5f4c"/><ellipse cx="25" cy="24" rx="10.500" ry="9.500" fill="#fdebe3"/><path d="M12 20c3-9 19-11 26-2-5 0-9 1-12 3-5-2-10-2-14-1z" fill="#9a6a55"/><ellipse cx="17" cy="8" rx="5.500" ry="4" fill="#a791dc"/><rect x="12" y="28" width="5" height="14" rx="2.500" fill="#8d5f4c"/><rect x="33" y="28" width="5" height="14" rx="2.500" fill="#8d5f4c"/><path d="M15 36h20l3 9H12z" fill="#cfc4ec"/><ellipse cx="19" cy="24" rx="1.800" ry="2.300" fill="#3a2d55"/><ellipse cx="18" cy="28" rx="2.500" ry="1.500" fill="#f9b8b8"/><ellipse cx="32" cy="28" rx="2.500" ry="1.500" fill="#f9b8b8"/></g></g><circle cx="24" cy="24" r="23.500" fill="none" stroke="#2b4a63" stroke-width=".8"/></svg>
<svg style="left:1749px;top:734px" width="20" height="20" viewBox="0 0 20 20"><circle cx="10" cy="10" r="9.500" fill="#161d24"/><rect x="7.800" y="4" width="4.400" height="7.500" rx="2.200" fill="none" stroke="#e6e8ea" stroke-width="1"/><path d="M5.800 9.500a4.200 4.200 0 0 0 8.400 0M10 13.800v2.200M8 16.200h4" fill="none" stroke="#e6e8ea" stroke-width="1"/><path d="M14.500 4L5 15.500" stroke="#e6e8ea" stroke-width="1.200"/><path d="M15.300 4.600L5.800 16.100" stroke="#c9a23a" stroke-width=".6"/></svg>
<div class="abs" style="left:1779px;top:658px;width:132px;height:99px;background:#1c252e"></div>
<div class="t" style="left:1783px;top:665px;font-size:12px;color:#fff">刘鑫楠</div>
<svg style="left:1821px;top:682.5px" width="48" height="48" viewBox="0 0 48 48"><defs><clipPath id="c9"><circle cx="24" cy="24" r="23.500"/></clipPath></defs><g clip-path="url(#c9)"><g filter="url(#b2)"><rect width="48" height="48" fill="#9db0c6"/><rect y="36" width="48" height="12" fill="#c9b5ac"/><ellipse cx="24" cy="19" rx="20" ry="12" fill="#e7e9ee"/><ellipse cx="10" cy="26" rx="6" ry="8" fill="#dfe2e8"/><ellipse cx="38" cy="26" rx="6" ry="8" fill="#dfe2e8"/><ellipse cx="24" cy="32" rx="12" ry="9" fill="#f3e3dc"/><ellipse cx="15" cy="33" rx="2.500" ry="2" fill="#f2c25a"/><ellipse cx="34" cy="33" rx="2.500" ry="2" fill="#f2c25a"/><ellipse cx="24" cy="5" rx="10" ry="4" fill="#a9c4e6"/><path d="M12 12c6-5 16-5 24 0" fill="none" stroke="#d9c27a" stroke-width="1.500"/><ellipse cx="24" cy="44" rx="10" ry="4" fill="#b7cbe0"/></g></g><circle cx="24" cy="24" r="23.500" fill="none" stroke="#2b4a63" stroke-width=".8"/></svg>
<svg style="left:1885px;top:734px" width="20" height="20" viewBox="0 0 20 20"><circle cx="10" cy="10" r="9.500" fill="#161d24"/><rect x="7.800" y="4" width="4.400" height="7.500" rx="2.200" fill="none" stroke="#e6e8ea" stroke-width="1"/><path d="M5.800 9.500a4.200 4.200 0 0 0 8.400 0M10 13.800v2.200M8 16.200h4" fill="none" stroke="#e6e8ea" stroke-width="1"/><path d="M14.500 4L5 15.500" stroke="#e6e8ea" stroke-width="1.200"/><path d="M15.300 4.600L5.800 16.100" stroke="#c9a23a" stroke-width=".6"/></svg>
<div class="abs" style="left:1643px;top:761px;width:132px;height:99px;background:#1c252e"></div>
<div class="t" style="left:1647px;top:768px;font-size:12px;color:#fff">姚芋芋</div>
<svg style="left:1685px;top:785.5px" width="48" height="48" viewBox="0 0 48 48"><defs><clipPath id="c10"><circle cx="24" cy="24" r="23.500"/></clipPath></defs><g clip-path="url(#c10)"><g filter="url(#b2)"><rect width="48" height="48" fill="#7d333b"/><rect x="0" y="0" width="48" height="14" fill="#4d2c38"/><ellipse cx="10" cy="26" rx="13" ry="18" fill="#b8615f"/><ellipse cx="4" cy="14" rx="9" ry="8" fill="#3a1f27"/><ellipse cx="21" cy="22" rx="5" ry="14" fill="#8a6a72"/><ellipse cx="36" cy="33" rx="11" ry="11" fill="#cfc1c5"/><path d="M27 27l1-8 6 5zM44 27l0-8-6 5z" fill="#c5b3b9"/><ellipse cx="32" cy="32" rx="1.300" ry="1" fill="#3a2a2f"/><ellipse cx="40" cy="32" rx="1.300" ry="1" fill="#3a2a2f"/><ellipse cx="9" cy="22" rx="3" ry="1.200" fill="#5a2a2d"/><rect x="10" y="42" width="30" height="6" fill="#8b3a40"/></g></g><circle cx="24" cy="24" r="23.500" fill="none" stroke="#2b4a63" stroke-width=".8"/></svg>
<svg style="left:1749px;top:837px" width="20" height="20" viewBox="0 0 20 20"><circle cx="10" cy="10" r="9.500" fill="#161d24"/><rect x="7.800" y="4" width="4.400" height="7.500" rx="2.200" fill="none" stroke="#e6e8ea" stroke-width="1"/><path d="M5.800 9.500a4.200 4.200 0 0 0 8.400 0M10 13.800v2.200M8 16.200h4" fill="none" stroke="#e6e8ea" stroke-width="1"/><path d="M14.500 4L5 15.500" stroke="#e6e8ea" stroke-width="1.200"/><path d="M15.300 4.600L5.800 16.100" stroke="#c9a23a" stroke-width=".6"/></svg>
<div class="abs" style="left:1779px;top:761px;width:132px;height:99px;background:#1c252e"></div>
<div class="t" style="left:1783px;top:768px;font-size:12px;color:#fff">郭兴花</div>
<svg style="left:1821px;top:785.5px" width="48" height="48" viewBox="0 0 48 48"><defs><clipPath id="c11"><circle cx="24" cy="24" r="23.500"/></clipPath></defs><g clip-path="url(#c11)"><g filter="url(#b1)"><rect width="48" height="48" fill="#f29ac0"/><rect y="30" width="48" height="18" fill="#f8d6e2"/><ellipse cx="24" cy="30" rx="24" ry="6" fill="#f5bdd3"/><ellipse cx="24" cy="27" rx="9" ry="8" fill="#241a1c"/><ellipse cx="24" cy="30" rx="6.500" ry="5.500" fill="#f8cdb6"/><path d="M15 23c2-7 16-7 18 0z" fill="#e8872e"/><path d="M17 26l2 2 2-2 2 2 2-2 2 2 2-2 2 2v-3H17z" fill="#241a1c"/><circle cx="21" cy="30" r=".9" fill="#241a1c"/><circle cx="27" cy="30" r=".9" fill="#241a1c"/><rect x="9" y="33" width="6" height="5" fill="#f3f0ea"/><rect x="10" y="35" width="4" height="2" fill="#e8a03a"/><path d="M37 18c2 1 3 3 3 5M35 20c1 1 2 2 2 4" fill="none" stroke="#fbe3ec" stroke-width="1"/></g></g><circle cx="24" cy="24" r="23.500" fill="none" stroke="#2b4a63" stroke-width=".8"/></svg>
<svg style="left:1885px;top:837px" width="20" height="20" viewBox="0 0 20 20"><circle cx="10" cy="10" r="9.500" fill="#161d24"/><rect x="7.800" y="4" width="4.400" height="7.500" rx="2.200" fill="none" stroke="#e6e8ea" stroke-width="1"/><path d="M5.800 9.500a4.200 4.200 0 0 0 8.400 0M10 13.800v2.200M8 16.200h4" fill="none" stroke="#e6e8ea" stroke-width="1"/><path d="M14.500 4L5 15.500" stroke="#e6e8ea" stroke-width="1.200"/><path d="M15.300 4.600L5.800 16.100" stroke="#c9a23a" stroke-width=".6"/></svg>
<div class="abs" style="left:1643px;top:864px;width:132px;height:99px;background:#1c252e"></div>
<div class="t" style="left:1647px;top:871px;font-size:12px;color:#fff">罗旋</div>
<svg style="left:1685px;top:888.5px" width="48" height="48" viewBox="0 0 48 48"><defs><clipPath id="c12"><circle cx="24" cy="24" r="23.500"/></clipPath></defs><g clip-path="url(#c12)"><g filter="url(#b2)"><rect width="48" height="48" fill="#dcd9d6"/><rect x="32" y="0" width="16" height="48" fill="#cfcac6"/><ellipse cx="20" cy="19" rx="16" ry="17" fill="#c8451f"/><ellipse cx="23" cy="24" rx="9" ry="10.500" fill="#f4d3c4"/><path d="M8 20C9 8 22 4 32 10c-6 1-11 4-14 9-2 4-3 9-2 14-5-2-8-7-8-13z" fill="#d24e22"/><path d="M22 30c4 3 10 2 13-4l4 3c-2 8-8 13-16 12z" fill="#f1cdbd"/><ellipse cx="25" cy="30" rx="2.300" ry="1.200" fill="#c92f35"/><ellipse cx="24" cy="45" rx="14" ry="6" fill="#e9c3ae"/><ellipse cx="20" cy="22" rx="1.800" ry="1" fill="#3a2420"/><ellipse cx="29" cy="22" rx="1.800" ry="1" fill="#3a2420"/></g></g><circle cx="24" cy="24" r="23.500" fill="none" stroke="#2b4a63" stroke-width=".8"/></svg>
<svg style="left:1749px;top:940px" width="20" height="20" viewBox="0 0 20 20"><circle cx="10" cy="10" r="9.500" fill="#161d24"/><rect x="7.800" y="4" width="4.400" height="7.500" rx="2.200" fill="none" stroke="#e6e8ea" stroke-width="1"/><path d="M5.800 9.500a4.200 4.200 0 0 0 8.400 0M10 13.800v2.200M8 16.200h4" fill="none" stroke="#e6e8ea" stroke-width="1"/><path d="M14.500 4L5 15.500" stroke="#e6e8ea" stroke-width="1.200"/><path d="M15.300 4.600L5.800 16.100" stroke="#c9a23a" stroke-width=".6"/></svg>
<div class="abs" style="left:1779px;top:864px;width:132px;height:99px;background:#1c252e"></div>
<div class="t" style="left:1783px;top:871px;font-size:12px;color:#fff">姚晨瑶</div>
<svg style="left:1821px;top:888.5px" width="48" height="48" viewBox="0 0 48 48"><defs><clipPath id="c13"><circle cx="24" cy="24" r="23.500"/></clipPath></defs><g clip-path="url(#c13)"><g filter="url(#b2)"><rect width="48" height="48" fill="#b5a896"/><rect x="0" y="0" width="14" height="30" fill="#a09381"/><ellipse cx="27" cy="14" rx="13" ry="11" fill="#ece6db"/><ellipse cx="26" cy="29" rx="12" ry="11" fill="#2a201d"/><ellipse cx="26" cy="29" rx="9" ry="8.500" fill="#efc9b3"/><path d="M15 21h24v4H15z" fill="#e3dccf"/><path d="M16 26c5-3 15-3 20 0l-1 3c-5-2-13-2-18 0z" fill="#241b18"/><ellipse cx="26" cy="46" rx="17" ry="8" fill="#e9e1d3"/><ellipse cx="22" cy="30" rx="1.500" ry="1.200" fill="#2a1d1a"/><ellipse cx="30" cy="30" rx="1.500" ry="1.200" fill="#2a1d1a"/><path d="M18 36c1 4 4 5 6 4l-2-4zM34 36c-1 4-4 5-6 4l2-4z" fill="#eac3ad"/></g></g><circle cx="24" cy="24" r="23.500" fill="none" stroke="#2b4a63" stroke-width=".8"/></svg>
<svg style="left:1885px;top:940px" width="20" height="20" viewBox="0 0 20 20"><circle cx="10" cy="10" r="9.500" fill="#161d24"/><rect x="7.800" y="4" width="4.400" height="7.500" rx="2.200" fill="none" stroke="#e6e8ea" stroke-width="1"/><path d="M5.800 9.500a4.200 4.200 0 0 0 8.400 0M10 13.800v2.200M8 16.200h4" fill="none" stroke="#e6e8ea" stroke-width="1"/><path d="M14.500 4L5 15.500" stroke="#e6e8ea" stroke-width="1.200"/><path d="M15.300 4.600L5.800 16.100" stroke="#c9a23a" stroke-width=".6"/></svg>
<div class="abs" style="left:1828px;top:869px;width:17px;height:16px;overflow:hidden"><div class="t" style="left:1px;top:2px;font-size:12px;color:#fff;letter-spacing:4px">19</div></div>
<div class="abs" style="left:1776px;top:987px;width:65px;height:21px;background:#1a2028;border-radius:2px"></div>
<svg style="left:1802px;top:992px" width="15" height="9" viewBox="0 0 15 9"><path d="M1 1l6.500 6.500L14 1" fill="none" stroke="#c3c7cb" stroke-width="1.300"/></svg>
<!--PANEL-END-->
<!-- control bar buttons -->
<div class="abs" style="left:0;top:932px;width:1636px;height:1.500px;background:#0b0e12"></div>
<div class="abs" style="left:568.500px;top:946px;width:42px;height:42px;border-radius:50%;background:#252b32"></div>
<svg style="left:580px;top:956px" width="20" height="22" viewBox="0 0 20 22"><path d="M5.500 11V4.500a1.400 1.400 0 0 1 2.800 0V10M8.300 9.500V3a1.400 1.400 0 0 1 2.800 0v6.500M11.100 9.500V4a1.400 1.400 0 0 1 2.800 0v7M13.900 11V6.500a1.300 1.300 0 0 1 2.600 0V14c0 4-2.500 6.500-6 6.500-3 0-4.500-1.500-6-4L2 12.500c-.8-1.500 1-2.700 2-1.500l1.500 2" fill="none" stroke="#e4e6e8" stroke-width="1.500" stroke-linecap="round" stroke-linejoin="round"/></svg>
<div class="t" style="left:579px;top:995px;font-size:10.200px;color:#989da3">举手</div>
<div class="abs" style="left:632px;top:946px;width:1px;height:59px;background:#2a3038"></div>
<div class="abs" style="left:653.500px;top:946px;width:42px;height:42px;border-radius:50%;background:#fff"></div>
<svg style="left:664px;top:958px" width="22" height="18" viewBox="0 0 22 18"><rect x="1.500" y="3.500" width="12.500" height="11" rx="1.500" fill="none" stroke="#2a2f36" stroke-width="1.500"/><path d="M14 7.500l5.500-3v9l-5.500-3z" fill="none" stroke="#2a2f36" stroke-width="1.500" stroke-linejoin="round"/><path d="M19 .5L3 17.500" stroke="#fff" stroke-width="3.500"/><path d="M18.500 1L3 17" stroke="#2a2f36" stroke-width="1.400"/></svg>
<div class="t" style="left:654px;top:995px;font-size:10.200px;color:#989da3">开摄像头</div>
<div class="abs" style="left:726px;top:946px;width:42px;height:42px;border-radius:50%;background:#fff"></div>
<svg style="left:738px;top:956px" width="18" height="22" viewBox="0 0 18 22"><rect x="6" y="1.500" width="6" height="11" rx="3" fill="none" stroke="#2a2f36" stroke-width="1.500"/><path d="M3 10.500a6 6 0 0 0 12 0M9 16.500v3.500M6 20.500h6" fill="none" stroke="#2a2f36" stroke-width="1.500" stroke-linecap="round"/><path d="M15.500 1.500L3 19.500" stroke="#fff" stroke-width="3.500"/><path d="M15 2L2.500 19" stroke="#2a2f36" stroke-width="1.400"/></svg>
<div class="t" style="left:726px;top:995px;font-size:10.200px;color:#989da3">取消静音</div>
<div class="abs" style="left:798px;top:946px;width:42px;height:42px;border-radius:50%;background:#252b32"></div>
<svg style="left:809px;top:958px" width="20" height="18" viewBox="0 0 20 18"><path d="M5 13.500H3A1.800 1.800 0 0 1 1.200 11.700V3A1.800 1.800 0 0 1 3 1.200h14A1.800 1.800 0 0 1 18.800 3v8.700A1.800 1.800 0 0 1 17 13.500h-2" fill="none" stroke="#e4e6e8" stroke-width="1.500"/><path d="M5.500 16.500L10 11l4.500 5.500z" fill="#e4e6e8"/></svg>
<div class="t" style="left:798px;top:995px;font-size:10.200px;color:#989da3">共享窗口</div>
<div class="abs" style="left:870px;top:946px;width:42px;height:42px;border-radius:50%;background:#252b32"></div>
<svg style="left:881px;top:957px" width="20" height="20" viewBox="0 0 20 20"><path d="M10 1.500a8.300 8.300 0 1 1-4.300 15.400L2 18l1.100-3.600A8.300 8.300 0 0 1 10 1.500z" fill="none" stroke="#e4e6e8" stroke-width="1.500" stroke-linejoin="round"/><circle cx="6.300" cy="10" r="1" fill="#e4e6e8"/><circle cx="10" cy="10" r="1" fill="#e4e6e8"/><circle cx="13.700" cy="10" r="1" fill="#e4e6e8"/></svg>
<div class="t" style="left:868px;top:993.500px;font-size:11px;color:#a0a5ab;letter-spacing:.2px">互动消息</div>
<div class="abs" style="left:942px;top:946px;width:42px;height:42px;border-radius:50%;background:#252b32"></div>
<svg style="left:953px;top:957px" width="20" height="20" viewBox="0 0 20 20"><path d="M8.300 1.500h3.400l.6 2.300 1.700 1 2.300-.7 1.700 3-1.700 1.600v2l1.700 1.600-1.700 3-2.300-.7-1.700 1-.6 2.300H8.300l-.6-2.300-1.700-1-2.300 .7-1.700-3 1.700-1.600v-2L2 7.100l1.700-3 2.300 .7 1.700-1z" fill="none" stroke="#e4e6e8" stroke-width="1.500" stroke-linejoin="round"/><circle cx="10" cy="10" r="3" fill="none" stroke="#e4e6e8" stroke-width="1.500"/></svg>
<div class="t" style="left:952.500px;top:995px;font-size:10.200px;color:#989da3">设置</div>
<div class="abs" style="left:1005px;top:946px;width:1px;height:59px;background:#2a3038"></div>
<div class="abs" style="left:1027px;top:946px;width:42px;height:42px;border-radius:50%;background:#252b32"></div>
<svg style="left:1039px;top:957px" width="18" height="19" viewBox="0 0 18 19"><path d="M5 5a7 7 0 1 0 8 0" fill="none" stroke="#f0552c" stroke-width="1.800" stroke-linecap="round"/><path d="M9 1.500v8" stroke="#f0552c" stroke-width="1.800" stroke-linecap="round"/></svg>
<div class="t" style="left:1027px;top:995px;font-size:10.200px;color:#989da3">离开课堂</div>

<div id="ctrlline" class="abs"></div>
<div id="vline" class="abs"></div>
<div id="win11" class="abs">
<div class="abs" style="left:0;top:-1020px;width:1920px;height:1080px">
<div class="abs" style="left:0;top:1020px;width:1920px;height:60px;background:linear-gradient(90deg,#f0f3e1 0,#f0f3e0 240px,#e9f2d0 290px,#e3f1c4 335px,#e9f2d0 380px,#f0f3e0 430px,#f0f3e0 100%)"></div>
<!-- start -->
<svg style="left:701px;top:1036px" width="29" height="29" viewBox="0 0 29 29"><defs><linearGradient id="wg" x1="0" y1="0" x2="1" y2="1"><stop offset="0" stop-color="#4cc2f5"/><stop offset="1" stop-color="#0a78d4"/></linearGradient></defs><rect x="0" y="0" width="13.700" height="13.700" rx="1" fill="url(#wg)"/><rect x="15.300" y="0" width="13.700" height="13.700" rx="1" fill="url(#wg)"/><rect x="0" y="15.300" width="13.700" height="13.700" rx="1" fill="url(#wg)"/><rect x="15.300" y="15.300" width="13.700" height="13.700" rx="1" fill="url(#wg)"/></svg>
<svg style="left:755px;top:1036px" width="30" height="30" viewBox="0 0 30 30"><circle cx="17.500" cy="11.500" r="9" fill="none" stroke="#1b1b1b" stroke-width="3.200"/><path d="M11 18.500L3 27" stroke="#1b1b1b" stroke-width="3.800" stroke-linecap="round"/></svg>
<svg style="left:809px;top:1035px" width="31" height="30" viewBox="0 0 31 30"><rect x="9" y="1" width="21" height="20" rx="2" fill="#f3f3f3" stroke="#d5d5d5"/><rect x="1" y="9" width="21" height="20" rx="2" fill="#2b2b2b"/><rect x="9" y="9" width="13" height="12" fill="#b9b9b9"/></svg>
<svg style="left:863px;top:1035px" width="31" height="30" viewBox="0 0 31 30"><rect x=".7" y=".7" width="29.600" height="28.600" rx="2" fill="#1668c2" stroke="#0f4f9c"/><rect x="3.500" y="3.500" width="10.500" height="23" rx="1" fill="#f4f8fc"/><rect x="16.500" y="3.500" width="11" height="11" rx="1" fill="#53c5f7"/><rect x="16.500" y="16" width="11" height="10.500" rx="1" fill="#2ba1ee"/></svg>
<svg style="left:918px;top:1036px" width="31" height="28" viewBox="0 0 31 28"><path d="M0 3a2 2 0 0 1 2-2h8l3 3h16a2 2 0 0 1 2 2v4H0z" fill="#e8a317"/><rect x="0" y="6" width="31" height="21" rx="2" fill="#fbd14c"/><rect x="6" y="17" width="19" height="7" rx="1.500" fill="#1c7fd6"/><rect x="9" y="19.500" width="13" height="2" fill="#0c5aa6"/></svg>
<svg style="left:974px;top:1034px" width="30" height="32" viewBox="0 0 30 32"><circle cx="14" cy="17" r="12.500" fill="#4fb83a"/><path d="M2 26C8 12 18 5 29 2 20 9 14 17 10 28z" fill="#7fd356" opacity=".9"/><path d="M8.500 17h11.500a6 6 0 0 0-11.800 1.500 6 6 0 0 0 11 2.500" fill="none" stroke="#fff" stroke-width="3"/></svg>
<svg style="left:1027px;top:1035px" width="30" height="30" viewBox="0 0 30 30"><circle cx="15" cy="15" r="14.500" fill="#1fa3ee"/><path d="M8 15.500h14a7 7 0 0 0-13.800 1.500 7 7 0 0 0 12.800 3" fill="none" stroke="#fff" stroke-width="3.300"/></svg>
<svg style="left:1081px;top:1034px" width="31" height="31" viewBox="0 0 31 31"><circle cx="15.500" cy="15.500" r="15" fill="#2e8cf0"/><path d="M7 8l17 5-6 4.500 2 2.500-4.500 1-3 6-1-7.500z" fill="#fff"/></svg>
<div class="abs" style="left:1093px;top:1070px;width:8px;height:3px;border-radius:1.500px;background:#8f9189"></div>
<div class="abs" style="left:1127px;top:1026px;width:48px;height:48px;border-radius:5px;background:#f9faf1;box-shadow:0 0 1px rgba(0,0,0,.12)"></div>
<svg style="left:1137px;top:1035px" width="28" height="28" viewBox="0 0 28 28"><circle cx="14" cy="14" r="14" fill="#f2501f"/><path d="M14 6.500l7.500 3.700L14 14 6.500 10.200zM6.500 14L14 17.800 21.500 14v4L14 21.800 6.500 18z" fill="#fff"/><path d="M12.500 9l3 1.300-3 1.400z" fill="#f2501f"/></svg>
<div class="abs" style="left:1141px;top:1070px;width:20px;height:3px;border-radius:1.500px;background:#a03bd6"></div>
<svg style="left:1190px;top:1036px" width="32" height="28" viewBox="0 0 32 28"><ellipse cx="12" cy="10.500" rx="12" ry="10.500" fill="#39cd52"/><path d="M5 18l-1.500 5 5.500-3z" fill="#39cd52"/><ellipse cx="22" cy="18.500" rx="9.500" ry="8" fill="#e3e5e3"/><path d="M27 24l1.500 3.500-4.500-2z" fill="#e3e5e3"/><circle cx="8" cy="8" r="1.300" fill="#1d8f33"/><circle cx="15.500" cy="8" r="1.300" fill="#1d8f33"/><circle cx="19" cy="16.500" r="1.100" fill="#9a9c9a"/><circle cx="25" cy="16.500" r="1.100" fill="#9a9c9a"/></svg>
<div class="abs" style="left:1201px;top:1070px;width:8px;height:3px;border-radius:1.500px;background:#8f9189"></div>
<!-- tray -->
<svg style="left:1511px;top:1045px" width="14" height="9" viewBox="0 0 14 9"><path d="M1 8l6-6.500L13 8" fill="none" stroke="#1b1b1b" stroke-width="1.500"/></svg>
<div class="abs" style="left:1538px;top:1040px;width:20px;height:20px;border-radius:50%;background:#2266e8"></div>
<svg style="left:1543px;top:1044px" width="10" height="11" viewBox="0 0 10 11"><path d="M2 0v9.500h7" fill="none" stroke="#fff" stroke-width="2.400"/></svg>
<svg style="left:1567px;top:1041px" width="22" height="18" viewBox="0 0 22 18"><path d="M5 14a4.500 4.500 0 0 1 .5-9 6 6 0 0 1 11.500 1.500 3.800 3.800 0 0 1 1 7.500z" fill="#5a5c5e"/><path d="M5 14a4.500 4.500 0 0 1 .5-9c2 2 5 7 9 9z" fill="#8d8f91"/><circle cx="16" cy="13" r="4.500" fill="#f3f5e8"/><path d="M13.500 12a2.800 2.800 0 0 1 5-1l.5-1.500M18.500 14a2.800 2.800 0 0 1-5 1l-.5 1.500" fill="none" stroke="#1a73d9" stroke-width="1.200"/></svg>
<div class="t" style="left:1603px;top:1042px;font-size:20px;color:#f6f7ee;text-shadow:-1px 0 #444,1px 0 #444,0 -1px #444,0 1px #444">中</div>
<svg style="left:1651px;top:1039px" width="21" height="21" viewBox="0 0 21 21"><path d="M1 3l17-2.500 2.500 16L4 20z" fill="#f2531d"/><path d="M15 6.500c-3-1.500-8-1-8 1.500 0 3 8 1.500 8 4.500 0 2.500-5.500 3-9 1" fill="none" stroke="#fff" stroke-width="2.400"/></svg>
<svg style="left:1697px;top:1041px" width="21" height="17" viewBox="0 0 21 17"><path d="M1 6a14 14 0 0 1 19 0M4 9.500a9.500 9.500 0 0 1 13 0M7 12.800a5 5 0 0 1 7 0" fill="none" stroke="#1b1b1b" stroke-width="1.500" stroke-linecap="round"/><circle cx="10.500" cy="15.500" r="1.300" fill="#1b1b1b"/></svg>
<svg style="left:1726px;top:1041px" width="22" height="17" viewBox="0 0 22 17"><path d="M1 6h3l5-4.500v14L4 11H1z" fill="none" stroke="#1b1b1b" stroke-width="1.400" stroke-linejoin="round"/><path d="M12 5.500a4 4 0 0 1 0 6" fill="none" stroke="#1b1b1b" stroke-width="1.300"/><path d="M14.500 3a7.500 7.500 0 0 1 0 11" fill="none" stroke="#888" stroke-width="1.200"/><path d="M17 1a10.500 10.500 0 0 1 0 15" fill="none" stroke="#c3c5bd" stroke-width="1.200"/></svg>
<svg style="left:1757px;top:1043px" width="21" height="13" viewBox="0 0 21 13"><rect x=".8" y=".8" width="17" height="11.400" rx="2.500" fill="none" stroke="#1b1b1b" stroke-width="1.500"/><rect x="3" y="3" width="4.500" height="7" rx="1" fill="#1b1b1b"/><path d="M19.500 4.500v4" stroke="#1b1b1b" stroke-width="2" stroke-linecap="round"/></svg>
<div class="t" style="right:59px;top:1032px;font-size:14px;color:#1b1b1b">19:48</div>
<div class="t" style="right:59px;top:1053px;font-size:14px;color:#1b1b1b">2022/3/17</div>
<div class="abs" style="left:1876px;top:1040px;width:20px;height:20px;border-radius:50%;background:#a63fd6"></div>
<div class="t" style="left:1883px;top:1044px;font-size:12px;color:#fff">1</div>
</div>

</div>
<div id="leftedge" class="abs"></div>
</body>
</html>
